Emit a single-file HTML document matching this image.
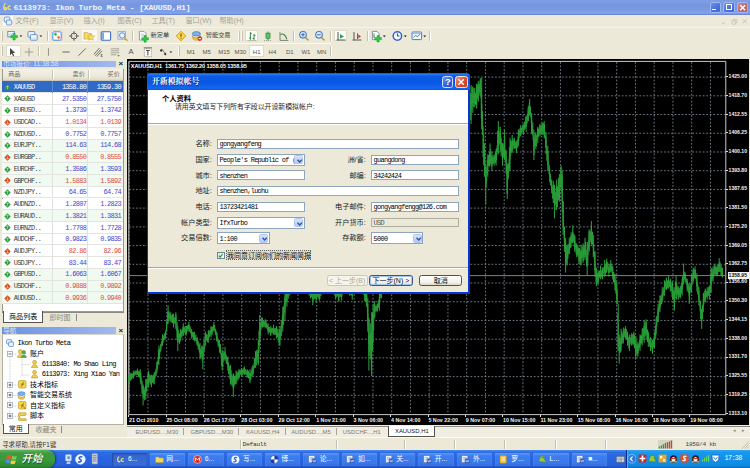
<!DOCTYPE html><html lang="zh"><head><meta charset="utf-8"><title>6113973: Ikon Turbo Meta - [XAUUSD,H1]</title><style>
*{box-sizing:border-box;margin:0;padding:0}
html,body{width:750px;height:468px;overflow:hidden;background:#ece9d8}
body{position:relative;font-family:"Liberation Mono","Noto Sans CJK SC",monospace;font-size:7px;color:#000;line-height:1}
.a{position:absolute}
.t{position:absolute;white-space:nowrap;line-height:1}
.m{font-family:"Liberation Mono","Noto Sans CJK SC",monospace;letter-spacing:-0.68px}
.s{font-family:"Liberation Sans","Noto Sans CJK SC",sans-serif}
#title{left:0;top:0;width:750px;height:14.6px;background:linear-gradient(#7e9fe6 0,#7695df 35%,#7a9be3 65%,#7fa5e8 88%,#6a7ad4 100%)}
#menubar{left:0;top:14.6px;width:750px;height:13px;background:#edeadb;border-bottom:1px solid #f6f5ec}
.mi{color:#a6a398;font-size:7.2px;top:17px}
.tb{background:#ece9d8}
.sep{position:absolute;width:1px;background:#c5c2b2;border-right:1px solid #fff;box-sizing:content-box}
.grip{position:absolute;width:2px;border-left:1px solid #faf9f4;border-right:1px solid #c4c1b2}
#mw{left:0;top:59px;width:124.5px;height:266px;background:#ece9d8}
.phead{position:absolute;height:7.6px;background:linear-gradient(90deg,#6c92e4,#86a5e8 50%,#a2baee);color:#dce6fa;font-size:6.6px}
.row{position:absolute;left:2.3px;width:121.2px;height:11.72px;border-bottom:1px solid #e4e4e0;font-size:6.9px}
.row .t{top:2.6px}
.up{color:#3a3ad0}.dn{color:#dc3a3a}
#dlg{left:146.6px;top:72.6px;width:323.8px;height:221.8px;background:#0a34d2;border-radius:4px 4px 0 0}
.fld{position:absolute;height:9.6px;background:#fff;border:1px solid #8fa4bd;font-size:6.9px}
.fld .t{left:2px;top:1.3px}
.lbl{position:absolute;font-size:7.2px;text-align:right;white-space:nowrap;line-height:1}
.cb{position:absolute;right:0.4px;top:0.4px;width:9px;height:9.2px;background:linear-gradient(#d8e4fd,#c2d3fb 60%,#b4c8f8);border-radius:1.5px;border:.5px solid #b0c4f0}
.btn{position:absolute;height:10.8px;border:1px solid #3a568e;border-radius:2.500px;background:linear-gradient(#fff,#f3f2ea 70%,#dcd8c8);font-size:7px;text-align:center;line-height:9.400px;white-space:nowrap}
#task{left:0;top:450.2px;width:750px;height:17.8px;background:linear-gradient(#4a8ef4 0,#2e6ce2 12%,#2963de 50%,#2760da 85%,#1f4cbc 100%)}
.tbtn{position:absolute;top:2.6px;height:13.4px;width:35.4px;border-radius:1.5px;background:linear-gradient(#5a95f4,#3c7df0 25%,#3a78ea 80%,#3068d8);box-shadow:inset 0 0 1px #8bb4ff;color:#fff;font-size:7px}
</style></head><body>
<div class="a" id="title"></div>
<svg class="a" style="left:2px;top:2px" width="10" height="10" viewBox="0 0 10 10"><path d="M3.5 1.2C1.5 3 1.2 6.2 2.6 7.6 3.4 8.3 4.6 7.6 4.4 6.3 4.2 5.2 2.8 5.4 2.9 6.5" fill="none" stroke="#f2e26a" stroke-width="1.3"/><path d="M8.6 4.2C7.2 3.6 5.8 4.6 5.9 6 6 7.4 7.8 7.8 8.8 6.9" fill="none" stroke="#f2e26a" stroke-width="1.3"/></svg>
<div class="t" style="left:13.4px;top:3.5px;font:bold 8.1px/1 'Liberation Mono',monospace;letter-spacing:-0.2px;color:#fff;opacity:.9">6113973: Ikon Turbo Meta - [XAUUSD,H1]</div>
<div class="a" style="left:709.6px;top:1.6px;width:11.4px;height:11.4px;border:1px solid #9fb6ee;border-radius:2px;background:linear-gradient(135deg,#6f94ea,#4a72d8 55%,#4168cc)"><div class="a" style="left:1.8px;top:6.2px;width:3.6px;height:1.6px;background:#fff"></div></div>
<div class="a" style="left:723.4px;top:1.6px;width:11.4px;height:11.4px;border:1px solid #9fb6ee;border-radius:2px;background:linear-gradient(135deg,#6f94ea,#4a72d8 55%,#4168cc)"><div class="a" style="left:1.8px;top:1.6px;width:5.8px;height:5.8px;border:1px solid #fff;border-top-width:1.8px"></div></div>
<div class="a" style="left:737px;top:1.6px;width:11.4px;height:11.4px;border:1px solid #9fb6ee;border-radius:2px;background:linear-gradient(135deg,#d08a90,#c2666e 55%,#b85a62)"><svg class="a" style="left:0;top:0" width="9.4" height="9.4" viewBox="0 0 9.4 9.4"><path d="M2.2 2.2L7.2 7.2M7.2 2.2L2.2 7.2" stroke="#fff" stroke-width="1.4"/></svg></div>
<div class="a" id="menubar"></div>
<svg class="a" style="left:2.6px;top:15.6px" width="10" height="10" viewBox="0 0 10 10"><rect x="0" y="0" width="10" height="10" fill="#fff" opacity=".7"/><rect x="1.2" y="1" width="5.6" height="5" rx="1" fill="#e8f0fb" stroke="#5f8fd0" stroke-width=".9"/><rect x="3.4" y="4" width="5.4" height="5" rx="1" fill="#e8f0fb" stroke="#5f8fd0" stroke-width=".9"/></svg>
<div class="t mi s" style="left:15.2px">文件(F)</div>
<div class="t mi s" style="left:49.4px">显示(V)</div>
<div class="t mi s" style="left:83.4px">插入(I)</div>
<div class="t mi s" style="left:117.4px">图表(C)</div>
<div class="t mi s" style="left:151.4px">工具(T)</div>
<div class="t mi s" style="left:185.4px">窗口(W)</div>
<div class="t mi s" style="left:219.4px">帮助(H)</div>
<svg class="a" style="left:719px;top:16.600px" width="30" height="9" viewBox="0 0 30 9"><path d="M3 6.200h2.400" stroke="#c6c3b4" stroke-width="1.100"/><path d="M13 3.800h3.400v3.400h-3.400zM14.400 3.800v-1.400h3.400v3.400h-1.400" stroke="#c6c3b4" stroke-width=".8" fill="none"/><path d="M23.800 2.400l3.800 3.800M27.600 2.400l-3.800 3.800" stroke="#c6c3b4" stroke-width="1"/></svg>
<div class="a tb" style="left:0;top:28px;width:750px;height:31px"></div>
<div class="a" style="left:0;top:42.6px;width:331px;height:1px;background:#dcd9ca"></div>
<div class="a" style="left:0;top:43.4px;width:331px;height:1px;background:#fbfaf6"></div>
<div class="grip" style="left:1.1px;top:30.6px;height:10px"></div>
<div class="grip" style="left:237.9px;top:30.6px;height:10px"></div>
<div class="grip" style="left:240.5px;top:30.6px;height:10px"></div>
<div class="grip" style="left:1.1px;top:46.4px;height:10px"></div>
<div class="grip" style="left:177.9px;top:46.4px;height:10px"></div>
<div class="sep" style="left:46.5px;top:30.6px;height:10px"></div>
<div class="sep" style="left:131.5px;top:30.6px;height:10px"></div>
<div class="sep" style="left:292.7px;top:30.6px;height:10px"></div>
<div class="sep" style="left:329.8px;top:30.6px;height:10px"></div>
<div class="sep" style="left:366.5px;top:30.6px;height:10px"></div>
<div class="sep" style="left:429px;top:30.6px;height:10px"></div>
<div class="sep" style="left:38.2px;top:46.4px;height:10px"></div>
<div class="sep" style="left:329.8px;top:46.4px;height:10px"></div>
<div class="a" style="left:50.8px;top:30px;width:11.8px;height:11.4px;background:#fcfcfa;border:1px solid #dedbcd;"></div>
<div class="a" style="left:81.8px;top:30px;width:14.8px;height:11.4px;background:#f9f8f4;"></div>
<div class="a" style="left:245px;top:30px;width:12.6px;height:11.4px;background:#fcfcfa;border:1px solid #dedbcd;"></div>
<div class="a" style="left:334px;top:30px;width:12.8px;height:11.4px;background:#fcfcfa;border:1px solid #dedbcd;"></div>
<div class="a" style="left:5.8px;top:45.4px;width:15px;height:11.4px;background:#fcfcfa;border:1px solid #dedbcd;"></div>
<div class="a" style="left:249.4px;top:45.4px;width:14.6px;height:11.4px;background:#fcfcfa;border:1px solid #dedbcd;"></div>
<svg class="a" style="left:6.8px;top:29.8px" width="17" height="12" viewBox="0 0 17 12"><rect x=".8" y="1.400" width="6.600" height="5.400" fill="#f4f8fd" stroke="#5b86c8" stroke-width=".9"/><path d="M2 5l1.400-1.400 1.200 1 1.600-1.600" stroke="#7a9ad0" stroke-width=".6" fill="none"/><path d="M3.8 5.6h2.2v-2.2h2.2v2.2h2.2v2.2h-2.2v2.2h-2.2v-2.2h-2.2z" fill="#2cc846" stroke="#1c9a30" stroke-width=".5"/><path d="M12.4 5.4l1.5 1.7 1.5-1.7z" fill="#222"/></svg>
<svg class="a" style="left:26.8px;top:29.8px" width="17" height="12" viewBox="0 0 17 12"><rect x="1" y="1.6" width="6.8" height="5.6" rx=".8" fill="#f4f8fd" stroke="#5b86c8" stroke-width=".9"/><rect x="3.4" y="4.600" width="6.8" height="5.600" rx=".8" fill="#f4f8fd" stroke="#5b86c8" stroke-width=".9"/><path d="M4.600 8.400h4.400" stroke="#9ab4dc" stroke-width=".6" stroke-dasharray=".8 .6"/><path d="M12.4 5.4l1.5 1.7 1.5-1.7z" fill="#222"/></svg>
<svg class="a" style="left:50.8px;top:29.8px" width="12" height="12" viewBox="0 0 12 12"><rect x="1.800" y="1.800" width="8.400" height="8.400" rx="1" fill="#fff" stroke="#4a86d8" stroke-width="1"/><path d="M4.400 4.400L7.800 7.800" stroke="#b0b8c0" stroke-width=".6"/><path d="M4.400 2.600l1.700 1.700-1.700 1.700-1.700-1.700z" fill="#2eb440"/><path d="M7.700 5.800l1.700 1.700-1.700 1.700-1.700-1.700z" fill="#e8783a"/></svg>
<svg class="a" style="left:67.7px;top:29.8px" width="12" height="12" viewBox="0 0 12 12"><circle cx="6" cy="6" r="3" fill="none" stroke="#666" stroke-width="1"/><path d="M6 1.200V4.400M6 7.600v3.200M1.200 6H4.400M7.600 6h3.200" stroke="#555" stroke-width="1"/></svg>
<svg class="a" style="left:83.4px;top:29.8px" width="12" height="12" viewBox="0 0 12 12"><path d="M1 2.600h3.600l.8 1H8v5.400H1z" fill="#f4dc6a" stroke="#c0a030" stroke-width=".6"/><path d="M8 3.600l1 2.300 2.500.2-1.900 1.600.6 2.500-2.200-1.400-2.200 1.400.6-2.500-1.900-1.600 2.500-.2z" fill="#fbe56a" stroke="#c8a020" stroke-width=".6"/></svg>
<svg class="a" style="left:100.2px;top:29.8px" width="12" height="12" viewBox="0 0 12 12"><rect x="1.200" y="1.800" width="9.400" height="8.400" rx="1" fill="#fff" stroke="#3f6fc0" stroke-width="1.100"/><rect x="1.800" y="2.400" width="2.200" height="7.200" fill="#7fa6e0"/></svg>
<svg class="a" style="left:117.4px;top:29.8px" width="12" height="12" viewBox="0 0 12 12"><rect x="1" y="1.600" width="7.400" height="7.600" fill="#dfe9f8" stroke="#8aa6d6" stroke-width=".8"/><circle cx="5.200" cy="5.400" r="2.700" fill="#eef4fc" stroke="#5a86c8" stroke-width=".9"/><path d="M7.400 7.800l3 3" stroke="#c8a030" stroke-width="1.500"/></svg>
<svg class="a" style="left:137.6px;top:29.8px" width="13" height="13" viewBox="0 0 13 13"><path d="M1.400 1.400h4.600l2 2v6.600h-6.600z" fill="#fff" stroke="#7a8aa0" stroke-width=".8"/><path d="M2.600 4.200h3.600M2.600 5.800h3.600" stroke="#9ab" stroke-width=".6"/><path d="M3.8 7.8h2.2v-2.2h2.2v2.2h2.2v2.2h-2.2v2.2h-2.2v-2.2h-2.2z" fill="#2cc846" stroke="#1c9a30" stroke-width=".5"/></svg>
<div class="t s" style="left:150.6px;top:32.4px;font-size:6.2px;color:#3a3a36">新定单</div>
<svg class="a" style="left:174.6px;top:29.8px" width="12" height="12" viewBox="0 0 12 12"><path d="M6 1.200l4.800 4.800-4.800 4.800-4.800-4.800z" fill="#fbd94a" stroke="#c89a10" stroke-width=".9"/><path d="M6 3.400v3.400M6 7.800v1" stroke="#6a4a00" stroke-width="1.100"/></svg>
<svg class="a" style="left:191px;top:29.8px" width="12" height="12" viewBox="0 0 12 12"><ellipse cx="5.400" cy="3.800" rx="4" ry="2.200" fill="#7ab2ea" stroke="#3a78c8" stroke-width=".7"/><path d="M1.400 5.600c0 3 8 3 8 0l-.6 3.400c-1 1.600-5.800 1.600-6.800 0z" fill="#f0c850" stroke="#b08a20" stroke-width=".6"/><circle cx="8.800" cy="8.600" r="2.300" fill="#e02818"/><rect x="7.700" y="8" width="2.200" height="1.200" fill="#fff"/></svg>
<div class="t s" style="left:205.8px;top:32.4px;font-size:6.2px;color:#3a3a36">智能交易</div>
<svg class="a" style="left:247px;top:29.8px" width="12" height="12" viewBox="0 0 12 12"><path d="M3.400 2.200v7.600M2 8h1.400M3.400 3.400h1.400M7 4v5.800M5.600 8.600h1.400M7 5.400h1.400" stroke="#2e8a3e" stroke-width="1"/><path d="M1.600 10.600h8" stroke="#777" stroke-width=".7" stroke-dasharray="1 1"/></svg>
<svg class="a" style="left:262px;top:29.8px" width="12" height="12" viewBox="0 0 12 12"><path d="M6 1.600v9" stroke="#2e8a3e" stroke-width="1"/><rect x="4" y="3.200" width="4" height="5" fill="#5ac86a" stroke="#2e8a3e" stroke-width=".8"/><path d="M2 10.600h8" stroke="#777" stroke-width=".7" stroke-dasharray="1 1"/></svg>
<svg class="a" style="left:278.4px;top:29.8px" width="12" height="12" viewBox="0 0 12 12"><path d="M2 2.200v8.200h8.400" stroke="#666" stroke-width=".8" fill="none"/><path d="M2.400 4.600c3-1.600 5 .4 6.400 4.600" stroke="#2e8a3e" stroke-width="1.100" fill="none"/></svg>
<svg class="a" style="left:297.8px;top:29.8px" width="12" height="12" viewBox="0 0 12 12"><circle cx="5" cy="4.800" r="3.300" fill="#e6f0fc" stroke="#3f78c8" stroke-width="1.100"/><path d="M7.600 7.600l2.800 2.800" stroke="#d0a030" stroke-width="1.700"/><path d="M3.200 4.800h3.600" stroke="#2a62b8" stroke-width="1"/><path d="M5 3v3.600" stroke="#2a62b8" stroke-width="1"/></svg>
<svg class="a" style="left:314.4px;top:29.8px" width="12" height="12" viewBox="0 0 12 12"><circle cx="5" cy="4.800" r="3.300" fill="#e6f0fc" stroke="#3f78c8" stroke-width="1.100"/><path d="M7.600 7.600l2.800 2.800" stroke="#d0a030" stroke-width="1.700"/><path d="M3.200 4.800h3.600" stroke="#2a62b8" stroke-width="1"/></svg>
<svg class="a" style="left:334.6px;top:29.8px" width="12" height="12" viewBox="0 0 12 12"><path d="M3 2v8.400M1.600 10h8.800" stroke="#555" stroke-width="1"/><path d="M5 4l4 2.400-4 2.400z" fill="#2fa84a"/></svg>
<svg class="a" style="left:351px;top:29.8px" width="12" height="12" viewBox="0 0 12 12"><path d="M3 2v8.400M1.600 10h8.800M6.600 3.400v5.600" stroke="#555" stroke-width="1"/><path d="M7.400 4.600l2.600 1.800-2.600 1.800z" fill="#c0392b"/></svg>
<svg class="a" style="left:371px;top:29.6px" width="16" height="13" viewBox="0 0 16 13"><path d="M1.400 1.400h4.600l2 2v6.200h-6.600z" fill="#fff" stroke="#6a7a90" stroke-width=".8"/><path d="M3 3.400v4.600" stroke="#2e8a3e" stroke-width="1"/><path d="M3.8 7.6h2.2v-2.2h2.2v2.2h2.2v2.2h-2.2v2.2h-2.2v-2.2h-2.2z" fill="#2cc846" stroke="#1c9a30" stroke-width=".5"/><path d="M11.8 5.6l1.5 1.7 1.5-1.7z" fill="#222"/></svg>
<svg class="a" style="left:391.6px;top:29.8px" width="16" height="12" viewBox="0 0 16 12"><circle cx="5.400" cy="6" r="4.200" fill="#f4f8ff" stroke="#2f68c8" stroke-width="1.500"/><path d="M5.400 3.400V6h2" stroke="#234" stroke-width=".9" fill="none"/><path d="M11.8 5.6l1.5 1.7 1.5-1.7z" fill="#222"/></svg>
<svg class="a" style="left:411.4px;top:29.8px" width="17" height="12" viewBox="0 0 17 12"><rect x="1" y="2" width="9.600" height="7.600" rx=".8" fill="#f2f6fc" stroke="#4a7ac8" stroke-width="1"/><path d="M2.400 7.400l2.200-2 1.800 1.200 2.600-2.400" stroke="#3a8a4a" stroke-width=".9" fill="none"/><path d="M1.600 3.600h8.400" stroke="#8ab0e8" stroke-width=".9"/><path d="M12.2 5.6l1.5 1.7 1.5-1.7z" fill="#222"/></svg>
<svg class="a" style="left:6.4px;top:45.8px" width="12" height="12" viewBox="0 0 12 12"><path d="M4 2v7.200l1.800-1.600 1.300 2.700 1.100-.5-1.300-2.700 2.300-.3z" fill="#484844"/></svg>
<svg class="a" style="left:23.2px;top:45.8px" width="12" height="12" viewBox="0 0 12 12"><path d="M6 1.800v8.400M1.800 6h8.400" stroke="#9a988c" stroke-width=".9"/></svg>
<svg class="a" style="left:46.2px;top:45.8px" width="5" height="12" viewBox="0 0 5 12"><path d="M2.500 2.200v7.600" stroke="#9a988c" stroke-width="1.100"/></svg>
<svg class="a" style="left:59.6px;top:45.8px" width="12" height="12" viewBox="0 0 12 12"><path d="M2.400 6h7.200" stroke="#77756c" stroke-width="1.100"/></svg>
<svg class="a" style="left:76px;top:45.8px" width="12" height="12" viewBox="0 0 12 12"><path d="M2.300 9.800L9.800 2.400" stroke="#6e6c64" stroke-width="1"/></svg>
<svg class="a" style="left:92.4px;top:45.8px" width="12" height="12" viewBox="0 0 12 12"><path d="M1.800 8.400L7.400 2M3.200 9.800L8.800 3.400M4.800 10.600L10 4.800" stroke="#66645c" stroke-width=".9"/><path d="M8.800 8.600h1.800M8.800 9.600h1.200M8.800 10.600h1.800" stroke="#333" stroke-width=".6"/></svg>
<svg class="a" style="left:109px;top:45.8px" width="12" height="12" viewBox="0 0 12 12"><path d="M1.800 2.800h8.400M1.800 4.800h8.400M1.800 6.800h8.400M1.800 8.800h5.600" stroke="#8c8a80" stroke-width=".7"/><path d="M8.400 9.200l1.200 1.400 1.200-1.400z" fill="#444"/></svg>
<div class="t s" style="left:128.4px;top:48.2px;font-size:7.6px;color:#55534c">A</div>
<svg class="a" style="left:141.6px;top:45.8px" width="12" height="12" viewBox="0 0 12 12"><rect x="2.400" y="2.600" width="7" height="8" fill="#fbfbf4" stroke="#8a887c" stroke-width=".7" stroke-dasharray="1 .6"/><path d="M4 4.400h3.800M5.900 4.400v5" stroke="#444" stroke-width="1"/><path d="M1.800 1.800h8.200" stroke="#6a6a60" stroke-width=".9"/></svg>
<svg class="a" style="left:158.4px;top:45.8px" width="16" height="12" viewBox="0 0 16 12"><path d="M1.800 4.400l1.400-1.600 1.400 1.600-1.400 1.600zM5.800 8l1.400-1.600L8.600 8 7.200 9.600z" fill="#333"/><path d="M4.400 3.200l2.200 3.800" stroke="#555" stroke-width=".7"/><path d="M11.4 5.4l1.5 1.7 1.5-1.7z" fill="#222"/></svg>
<div class="t s" style="left:186.8px;top:49px;font-size:6px;color:#55534c">M1</div>
<div class="t s" style="left:202.6px;top:49px;font-size:6px;color:#55534c">M5</div>
<div class="t s" style="left:218.2px;top:49px;font-size:6px;color:#55534c">M15</div>
<div class="t s" style="left:234.4px;top:49px;font-size:6px;color:#55534c">M30</div>
<div class="t s" style="left:252.8px;top:49px;font-size:6px;color:#55534c">H1</div>
<div class="t s" style="left:268.6px;top:49px;font-size:6px;color:#55534c">H4</div>
<div class="t s" style="left:286px;top:49px;font-size:6px;color:#55534c">D1</div>
<div class="t s" style="left:301.4px;top:49px;font-size:6px;color:#55534c">W1</div>
<div class="t s" style="left:317px;top:49px;font-size:6px;color:#55534c">MN</div>
<div class="phead" style="left:2.2px;top:60.6px;width:113.6px;height:6.8px"><div class="t s" style="left:1px;top:.2px;font-size:6.6px">市场报价: 11:38:58</div></div>
<div class="t s" style="left:118.4px;top:59.8px;font-size:8px;font-weight:bold;color:#222">×</div>
<div class="a" style="left:1.8px;top:68.6px;width:122.2px;height:243.4px;background:#fff;border:1px solid #9c9a8c"></div>
<div class="a" style="left:2.6px;top:69.4px;width:120.6px;height:11.2px;background:linear-gradient(#f3f1e8,#ece9d8 70%,#dedac8);border-bottom:1px solid #cbc7b8"></div>
<div class="a" style="left:2.6px;top:80.6px;width:120.6px;height:1.2px;background:#316ac5"></div>
<div class="t s" style="left:8.2px;top:71.4px;font-size:6.1px;color:#6a685e">商品</div>
<div class="t s" style="left:72.6px;top:71.4px;font-size:6.1px;color:#6a685e">卖价</div>
<div class="t s" style="left:107.6px;top:71.4px;font-size:6.1px;color:#6a685e">买价</div>
<div class="a" style="left:52.2px;top:70.4px;width:1px;height:9px;background:#c8c5b6;border-right:1px solid #fff;box-sizing:content-box"></div>
<div class="a" style="left:87.6px;top:70.4px;width:1px;height:9px;background:#c8c5b6;border-right:1px solid #fff;box-sizing:content-box"></div>
<div class="row" style="top:81.3px;background:#316ac5">
<svg class="a" style="left:2px;top:2.4px" width="7" height="7" viewBox="0 0 7 7"><path d="M3.5 .3L6.7 3.5 3.5 6.7.3 3.5z" fill="#2a9a3a"/><path d="M3.5 1.8v3.4M2.2 3.2l1.3-1.4 1.3 1.4" stroke="#fff" stroke-opacity=".55" stroke-width=".8" fill="none"/></svg>
<div class="t m" style="left:11.4px;color:#fff">XAUUSD</div>
<div class="t m" style="right:37.4px;color:#fff">1358.80</div>
<div class="t m" style="right:2.6px;color:#fff">1359.30</div>
<div class="a" style="left:49.8px;top:0;width:1px;height:11.72px;background:#5d8ad6"></div>
<div class="a" style="left:85.2px;top:0;width:1px;height:11.72px;background:#5d8ad6"></div>
</div>
<div class="row" style="top:93.02px;background:#fff">
<svg class="a" style="left:2px;top:2.4px" width="7" height="7" viewBox="0 0 7 7"><path d="M3.5 .3L6.7 3.5 3.5 6.7.3 3.5z" fill="#2a9a3a"/><path d="M3.5 1.8v3.4M2.2 3.2l1.3-1.4 1.3 1.4" stroke="#fff" stroke-opacity=".55" stroke-width=".8" fill="none"/></svg>
<div class="t m" style="left:11.4px;color:#3c3c38">XAGUSD</div>
<div class="t m" style="right:37.4px;color:#4545d2">27.5350</div>
<div class="t m" style="right:2.6px;color:#4545d2">27.5750</div>
<div class="a" style="left:49.8px;top:0;width:1px;height:11.72px;background:#e0e0dc"></div>
<div class="a" style="left:85.2px;top:0;width:1px;height:11.72px;background:#e0e0dc"></div>
</div>
<div class="row" style="top:104.74px;background:#fff">
<svg class="a" style="left:2px;top:2.4px" width="7" height="7" viewBox="0 0 7 7"><path d="M3.5 .3L6.7 3.5 3.5 6.7.3 3.5z" fill="#2a9a3a"/><path d="M3.5 1.8v3.4M2.2 3.2l1.3-1.4 1.3 1.4" stroke="#fff" stroke-opacity=".55" stroke-width=".8" fill="none"/></svg>
<div class="t m" style="left:11.4px;color:#3c3c38">EURUSD..</div>
<div class="t m" style="right:37.4px;color:#4545d2">1.3739</div>
<div class="t m" style="right:2.6px;color:#4545d2">1.3742</div>
<div class="a" style="left:49.8px;top:0;width:1px;height:11.72px;background:#e0e0dc"></div>
<div class="a" style="left:85.2px;top:0;width:1px;height:11.72px;background:#e0e0dc"></div>
</div>
<div class="row" style="top:116.46px;background:#fff">
<svg class="a" style="left:2px;top:2.4px" width="7" height="7" viewBox="0 0 7 7"><path d="M3.5 .3L6.7 3.5 3.5 6.7.3 3.5z" fill="#d8481c"/><path d="M3.5 1.8v3.4M2.2 3.8l1.3 1.4 1.3-1.4" stroke="#fff" stroke-opacity=".55" stroke-width=".8" fill="none"/></svg>
<div class="t m" style="left:11.4px;color:#3c3c38">USDCAD..</div>
<div class="t m" style="right:37.4px;color:#de4a44">1.0134</div>
<div class="t m" style="right:2.6px;color:#de4a44">1.0139</div>
<div class="a" style="left:49.8px;top:0;width:1px;height:11.72px;background:#e0e0dc"></div>
<div class="a" style="left:85.2px;top:0;width:1px;height:11.72px;background:#e0e0dc"></div>
</div>
<div class="row" style="top:128.18px;background:#fff">
<svg class="a" style="left:2px;top:2.4px" width="7" height="7" viewBox="0 0 7 7"><path d="M3.5 .3L6.7 3.5 3.5 6.7.3 3.5z" fill="#2a9a3a"/><path d="M3.5 1.8v3.4M2.2 3.2l1.3-1.4 1.3 1.4" stroke="#fff" stroke-opacity=".55" stroke-width=".8" fill="none"/></svg>
<div class="t m" style="left:11.4px;color:#3c3c38">NZDUSD..</div>
<div class="t m" style="right:37.4px;color:#4545d2">0.7752</div>
<div class="t m" style="right:2.6px;color:#4545d2">0.7757</div>
<div class="a" style="left:49.8px;top:0;width:1px;height:11.72px;background:#e0e0dc"></div>
<div class="a" style="left:85.2px;top:0;width:1px;height:11.72px;background:#e0e0dc"></div>
</div>
<div class="row" style="top:139.9px;background:#f1faf0">
<svg class="a" style="left:2px;top:2.4px" width="7" height="7" viewBox="0 0 7 7"><path d="M3.5 .3L6.7 3.5 3.5 6.7.3 3.5z" fill="#2a9a3a"/><path d="M3.5 1.8v3.4M2.2 3.2l1.3-1.4 1.3 1.4" stroke="#fff" stroke-opacity=".55" stroke-width=".8" fill="none"/></svg>
<div class="t m" style="left:11.4px;color:#3c3c38">EURJPY..</div>
<div class="t m" style="right:37.4px;color:#4545d2">114.63</div>
<div class="t m" style="right:2.6px;color:#4545d2">114.68</div>
<div class="a" style="left:49.8px;top:0;width:1px;height:11.72px;background:#e0e0dc"></div>
<div class="a" style="left:85.2px;top:0;width:1px;height:11.72px;background:#e0e0dc"></div>
</div>
<div class="row" style="top:151.62px;background:#f1faf0">
<svg class="a" style="left:2px;top:2.4px" width="7" height="7" viewBox="0 0 7 7"><path d="M3.5 .3L6.7 3.5 3.5 6.7.3 3.5z" fill="#d8481c"/><path d="M3.5 1.8v3.4M2.2 3.8l1.3 1.4 1.3-1.4" stroke="#fff" stroke-opacity=".55" stroke-width=".8" fill="none"/></svg>
<div class="t m" style="left:11.4px;color:#3c3c38">EURGBP..</div>
<div class="t m" style="right:37.4px;color:#de4a44">0.8550</div>
<div class="t m" style="right:2.6px;color:#de4a44">0.8555</div>
<div class="a" style="left:49.8px;top:0;width:1px;height:11.72px;background:#e0e0dc"></div>
<div class="a" style="left:85.2px;top:0;width:1px;height:11.72px;background:#e0e0dc"></div>
</div>
<div class="row" style="top:163.34px;background:#f1faf0">
<svg class="a" style="left:2px;top:2.4px" width="7" height="7" viewBox="0 0 7 7"><path d="M3.5 .3L6.7 3.5 3.5 6.7.3 3.5z" fill="#2a9a3a"/><path d="M3.5 1.8v3.4M2.2 3.2l1.3-1.4 1.3 1.4" stroke="#fff" stroke-opacity=".55" stroke-width=".8" fill="none"/></svg>
<div class="t m" style="left:11.4px;color:#3c3c38">EURCHF..</div>
<div class="t m" style="right:37.4px;color:#4545d2">1.3586</div>
<div class="t m" style="right:2.6px;color:#4545d2">1.3593</div>
<div class="a" style="left:49.8px;top:0;width:1px;height:11.72px;background:#e0e0dc"></div>
<div class="a" style="left:85.2px;top:0;width:1px;height:11.72px;background:#e0e0dc"></div>
</div>
<div class="row" style="top:175.06px;background:#f1faf0">
<svg class="a" style="left:2px;top:2.4px" width="7" height="7" viewBox="0 0 7 7"><path d="M3.5 .3L6.7 3.5 3.5 6.7.3 3.5z" fill="#d8481c"/><path d="M3.5 1.8v3.4M2.2 3.8l1.3 1.4 1.3-1.4" stroke="#fff" stroke-opacity=".55" stroke-width=".8" fill="none"/></svg>
<div class="t m" style="left:11.4px;color:#3c3c38">GBPCHF..</div>
<div class="t m" style="right:37.4px;color:#de4a44">1.5883</div>
<div class="t m" style="right:2.6px;color:#de4a44">1.5892</div>
<div class="a" style="left:49.8px;top:0;width:1px;height:11.72px;background:#e0e0dc"></div>
<div class="a" style="left:85.2px;top:0;width:1px;height:11.72px;background:#e0e0dc"></div>
</div>
<div class="row" style="top:186.78px;background:#fff">
<svg class="a" style="left:2px;top:2.4px" width="7" height="7" viewBox="0 0 7 7"><path d="M3.5 .3L6.7 3.5 3.5 6.7.3 3.5z" fill="#2a9a3a"/><path d="M3.5 1.8v3.4M2.2 3.2l1.3-1.4 1.3 1.4" stroke="#fff" stroke-opacity=".55" stroke-width=".8" fill="none"/></svg>
<div class="t m" style="left:11.4px;color:#3c3c38">NZDJPY..</div>
<div class="t m" style="right:37.4px;color:#4545d2">64.65</div>
<div class="t m" style="right:2.6px;color:#4545d2">64.74</div>
<div class="a" style="left:49.8px;top:0;width:1px;height:11.72px;background:#e0e0dc"></div>
<div class="a" style="left:85.2px;top:0;width:1px;height:11.72px;background:#e0e0dc"></div>
</div>
<div class="row" style="top:198.5px;background:#fff">
<svg class="a" style="left:2px;top:2.4px" width="7" height="7" viewBox="0 0 7 7"><path d="M3.5 .3L6.7 3.5 3.5 6.7.3 3.5z" fill="#2a9a3a"/><path d="M3.5 1.8v3.4M2.2 3.2l1.3-1.4 1.3 1.4" stroke="#fff" stroke-opacity=".55" stroke-width=".8" fill="none"/></svg>
<div class="t m" style="left:11.4px;color:#3c3c38">AUDNZD..</div>
<div class="t m" style="right:37.4px;color:#4545d2">1.2807</div>
<div class="t m" style="right:2.6px;color:#4545d2">1.2823</div>
<div class="a" style="left:49.8px;top:0;width:1px;height:11.72px;background:#e0e0dc"></div>
<div class="a" style="left:85.2px;top:0;width:1px;height:11.72px;background:#e0e0dc"></div>
</div>
<div class="row" style="top:210.22px;background:#f1faf0">
<svg class="a" style="left:2px;top:2.4px" width="7" height="7" viewBox="0 0 7 7"><path d="M3.5 .3L6.7 3.5 3.5 6.7.3 3.5z" fill="#2a9a3a"/><path d="M3.5 1.8v3.4M2.2 3.2l1.3-1.4 1.3 1.4" stroke="#fff" stroke-opacity=".55" stroke-width=".8" fill="none"/></svg>
<div class="t m" style="left:11.4px;color:#3c3c38">EURAUD..</div>
<div class="t m" style="right:37.4px;color:#4545d2">1.3821</div>
<div class="t m" style="right:2.6px;color:#4545d2">1.3831</div>
<div class="a" style="left:49.8px;top:0;width:1px;height:11.72px;background:#e0e0dc"></div>
<div class="a" style="left:85.2px;top:0;width:1px;height:11.72px;background:#e0e0dc"></div>
</div>
<div class="row" style="top:221.94px;background:#fff">
<svg class="a" style="left:2px;top:2.4px" width="7" height="7" viewBox="0 0 7 7"><path d="M3.5 .3L6.7 3.5 3.5 6.7.3 3.5z" fill="#2a9a3a"/><path d="M3.5 1.8v3.4M2.2 3.2l1.3-1.4 1.3 1.4" stroke="#fff" stroke-opacity=".55" stroke-width=".8" fill="none"/></svg>
<div class="t m" style="left:11.4px;color:#3c3c38">EURNZD..</div>
<div class="t m" style="right:37.4px;color:#4545d2">1.7708</div>
<div class="t m" style="right:2.6px;color:#4545d2">1.7728</div>
<div class="a" style="left:49.8px;top:0;width:1px;height:11.72px;background:#e0e0dc"></div>
<div class="a" style="left:85.2px;top:0;width:1px;height:11.72px;background:#e0e0dc"></div>
</div>
<div class="row" style="top:233.66px;background:#fff">
<svg class="a" style="left:2px;top:2.4px" width="7" height="7" viewBox="0 0 7 7"><path d="M3.5 .3L6.7 3.5 3.5 6.7.3 3.5z" fill="#2a9a3a"/><path d="M3.5 1.8v3.4M2.2 3.2l1.3-1.4 1.3 1.4" stroke="#fff" stroke-opacity=".55" stroke-width=".8" fill="none"/></svg>
<div class="t m" style="left:11.4px;color:#3c3c38">AUDCHF..</div>
<div class="t m" style="right:37.4px;color:#4545d2">0.9823</div>
<div class="t m" style="right:2.6px;color:#4545d2">0.9835</div>
<div class="a" style="left:49.8px;top:0;width:1px;height:11.72px;background:#e0e0dc"></div>
<div class="a" style="left:85.2px;top:0;width:1px;height:11.72px;background:#e0e0dc"></div>
</div>
<div class="row" style="top:245.38px;background:#fff">
<svg class="a" style="left:2px;top:2.4px" width="7" height="7" viewBox="0 0 7 7"><path d="M3.5 .3L6.7 3.5 3.5 6.7.3 3.5z" fill="#d8481c"/><path d="M3.5 1.8v3.4M2.2 3.8l1.3 1.4 1.3-1.4" stroke="#fff" stroke-opacity=".55" stroke-width=".8" fill="none"/></svg>
<div class="t m" style="left:11.4px;color:#3c3c38">AUDJPY..</div>
<div class="t m" style="right:37.4px;color:#de4a44">82.86</div>
<div class="t m" style="right:2.6px;color:#de4a44">82.96</div>
<div class="a" style="left:49.8px;top:0;width:1px;height:11.72px;background:#e0e0dc"></div>
<div class="a" style="left:85.2px;top:0;width:1px;height:11.72px;background:#e0e0dc"></div>
</div>
<div class="row" style="top:257.1px;background:#fff">
<svg class="a" style="left:2px;top:2.4px" width="7" height="7" viewBox="0 0 7 7"><path d="M3.5 .3L6.7 3.5 3.5 6.7.3 3.5z" fill="#2a9a3a"/><path d="M3.5 1.8v3.4M2.2 3.2l1.3-1.4 1.3 1.4" stroke="#fff" stroke-opacity=".55" stroke-width=".8" fill="none"/></svg>
<div class="t m" style="left:11.4px;color:#3c3c38">USDJPY..</div>
<div class="t m" style="right:37.4px;color:#4545d2">83.44</div>
<div class="t m" style="right:2.6px;color:#4545d2">83.47</div>
<div class="a" style="left:49.8px;top:0;width:1px;height:11.72px;background:#e0e0dc"></div>
<div class="a" style="left:85.2px;top:0;width:1px;height:11.72px;background:#e0e0dc"></div>
</div>
<div class="row" style="top:268.82px;background:#f1faf0">
<svg class="a" style="left:2px;top:2.4px" width="7" height="7" viewBox="0 0 7 7"><path d="M3.5 .3L6.7 3.5 3.5 6.7.3 3.5z" fill="#2a9a3a"/><path d="M3.5 1.8v3.4M2.2 3.2l1.3-1.4 1.3 1.4" stroke="#fff" stroke-opacity=".55" stroke-width=".8" fill="none"/></svg>
<div class="t m" style="left:11.4px;color:#3c3c38">GBPUSD..</div>
<div class="t m" style="right:37.4px;color:#4545d2">1.6063</div>
<div class="t m" style="right:2.6px;color:#4545d2">1.6067</div>
<div class="a" style="left:49.8px;top:0;width:1px;height:11.72px;background:#e0e0dc"></div>
<div class="a" style="left:85.2px;top:0;width:1px;height:11.72px;background:#e0e0dc"></div>
</div>
<div class="row" style="top:280.54px;background:#f1faf0">
<svg class="a" style="left:2px;top:2.4px" width="7" height="7" viewBox="0 0 7 7"><path d="M3.5 .3L6.7 3.5 3.5 6.7.3 3.5z" fill="#d8481c"/><path d="M3.5 1.8v3.4M2.2 3.8l1.3 1.4 1.3-1.4" stroke="#fff" stroke-opacity=".55" stroke-width=".8" fill="none"/></svg>
<div class="t m" style="left:11.4px;color:#3c3c38">USDCHF..</div>
<div class="t m" style="right:37.4px;color:#de4a44">0.9888</div>
<div class="t m" style="right:2.6px;color:#de4a44">0.9892</div>
<div class="a" style="left:49.8px;top:0;width:1px;height:11.72px;background:#e0e0dc"></div>
<div class="a" style="left:85.2px;top:0;width:1px;height:11.72px;background:#e0e0dc"></div>
</div>
<div class="row" style="top:292.26px;background:#f1faf0">
<svg class="a" style="left:2px;top:2.4px" width="7" height="7" viewBox="0 0 7 7"><path d="M3.5 .3L6.7 3.5 3.5 6.7.3 3.5z" fill="#d8481c"/><path d="M3.5 1.8v3.4M2.2 3.8l1.3 1.4 1.3-1.4" stroke="#fff" stroke-opacity=".55" stroke-width=".8" fill="none"/></svg>
<div class="t m" style="left:11.4px;color:#3c3c38">AUDUSD..</div>
<div class="t m" style="right:37.4px;color:#de4a44">0.9936</div>
<div class="t m" style="right:2.6px;color:#de4a44">0.9940</div>
<div class="a" style="left:49.8px;top:0;width:1px;height:11.72px;background:#e0e0dc"></div>
<div class="a" style="left:85.2px;top:0;width:1px;height:11.72px;background:#e0e0dc"></div>
</div>
<div class="a" style="left:1.8px;top:311.6px;width:122.4px;height:1px;background:#8a887c"></div>
<div class="a" style="left:3.2px;top:311px;width:39.4px;height:11.8px;background:#fff;border:1px solid #55534c;border-top:none"></div>
<div class="t s" style="left:9px;top:313.6px;font-size:7.1px;color:#000">商品列表</div>
<div class="t s" style="left:49.4px;top:313.8px;font-size:7px;color:#8a887c">即时图</div>
<div class="a" style="left:75.6px;top:314px;width:1px;height:7px;background:#8a887c"></div>
<div class="phead" style="left:2.2px;top:327.4px;width:113.6px;height:6.9px"><div class="t s" style="left:1px;top:.2px;font-size:6.6px">导航</div></div>
<div class="t s" style="left:118.4px;top:326.8px;font-size:8px;font-weight:bold;color:#222">×</div>
<div class="a" style="left:1.8px;top:334.4px;width:122.4px;height:90.4px;background:#fff;border:1px solid #b4b1a2;border-top-color:#dcdacd"></div>
<div class="a" style="left:0;top:.7px;width:125px;height:0">
<svg class="a" style="left:0;top:336px" width="60" height="88" viewBox="0 0 60 88"><path d="M10 20v60M22 22v17M22 27.6h8M22 38h8M12 48h6M12 58.4h6M12 69h6M12 79.4h6M12 17h5" stroke="#b0aea4" stroke-width=".7" stroke-dasharray=".8 .8" fill="none"/></svg>
<svg class="a" style="left:6.4px;top:338.6px" width="8" height="8" viewBox="0 0 8 8"><rect x=".6" y=".6" width="5" height="4.4" rx=".8" fill="#eef4fc" stroke="#4a86d8" stroke-width=".8"/><rect x="2.6" y="3" width="5" height="4.4" rx=".8" fill="#eef4fc" stroke="#4a86d8" stroke-width=".8"/></svg>
<div class="t m" style="left:17.4px;top:339px;font-size:7px;color:#000">Ikon Turbo Meta</div>
<svg class="a" style="left:7.2px;top:350.2px" width="6" height="6" viewBox="0 0 6 6"><rect x=".5" y=".5" width="5" height="5" fill="#fff" stroke="#8a9ab0" stroke-width=".7"/><path d="M1.6 3h2.8" stroke="#222" stroke-width=".7"/></svg>
<svg class="a" style="left:17px;top:348.4px" width="10" height="9" viewBox="0 0 10 9"><circle cx="3.4" cy="2.6" r="2" fill="#f2cc3a" stroke="#a8861a" stroke-width=".5"/><path d="M.6 8.4c0-4 5.6-4 5.6 0z" fill="#f2cc3a" stroke="#a8861a" stroke-width=".5"/><circle cx="6.8" cy="3.4" r="1.8" fill="#5ab04a" stroke="#2e7a2a" stroke-width=".5"/><path d="M4.4 8.6c0-3.4 5-3.4 5 0z" fill="#5ab04a" stroke="#2e7a2a" stroke-width=".5"/></svg>
<div class="t s" style="left:30px;top:349.4px;font-size:7px;color:#000">账户</div>
<svg class="a" style="left:30.6px;top:359.2px" width="8" height="8.4" viewBox="0 0 8 8.4"><circle cx="3.6" cy="2.2" r="1.9" fill="#f4cf40" stroke="#a8861a" stroke-width=".5"/><path d="M.6 8c0-4.4 6-4.4 6 0z" fill="#f4cf40" stroke="#a8861a" stroke-width=".5"/></svg>
<div class="t m" style="left:41.8px;top:360px;font-size:7px;color:#000">6113840: Mo Shao Ling</div>
<svg class="a" style="left:30.6px;top:369.6px" width="8" height="8.4" viewBox="0 0 8 8.4"><circle cx="3.6" cy="2.2" r="1.9" fill="#f4cf40" stroke="#a8861a" stroke-width=".5"/><path d="M.6 8c0-4.4 6-4.4 6 0z" fill="#f4cf40" stroke="#a8861a" stroke-width=".5"/></svg>
<div class="t m" style="left:41.8px;top:370.4px;font-size:7px;color:#000">6113973: Xing Xiao Yan</div>
<svg class="a" style="left:7.2px;top:381px" width="6" height="6" viewBox="0 0 6 6"><rect x=".5" y=".5" width="5" height="5" fill="#fff" stroke="#8a9ab0" stroke-width=".7"/><path d="M1.6 3h2.8M3 1.6v2.8" stroke="#222" stroke-width=".7"/></svg>
<svg class="a" style="left:18px;top:379.6px" width="9" height="9" viewBox="0 0 9 9"><rect x=".6" y=".6" width="7.4" height="7.4" rx="1" fill="#f6d84a" stroke="#b0901c" stroke-width=".6"/><path d="M3.2 6.6c1.4 0 1.2-4.6 2.6-4.6M2.8 4.2h3" stroke="#6a5408" stroke-width=".7" fill="none"/></svg>
<div class="t s" style="left:30px;top:380.4px;font-size:7px;color:#000">技术指标</div>
<svg class="a" style="left:7.2px;top:391.4px" width="6" height="6" viewBox="0 0 6 6"><rect x=".5" y=".5" width="5" height="5" fill="#fff" stroke="#8a9ab0" stroke-width=".7"/><path d="M1.6 3h2.8M3 1.6v2.8" stroke="#222" stroke-width=".7"/></svg>
<svg class="a" style="left:17.4px;top:390px" width="10" height="9" viewBox="0 0 10 9"><ellipse cx="4.4" cy="2.6" rx="3.6" ry="1.9" fill="#7ab2ea" stroke="#3a78c8" stroke-width=".6"/><path d="M1 4.2c0 2.4 7 2.4 7 0l-.6 3c-1 1.4-4.8 1.4-5.8 0z" fill="#f0c850" stroke="#b08a20" stroke-width=".5"/></svg>
<div class="t s" style="left:30px;top:390.8px;font-size:7px;color:#000">智能交易系统</div>
<svg class="a" style="left:7.2px;top:401.8px" width="6" height="6" viewBox="0 0 6 6"><rect x=".5" y=".5" width="5" height="5" fill="#fff" stroke="#8a9ab0" stroke-width=".7"/><path d="M1.6 3h2.8M3 1.6v2.8" stroke="#222" stroke-width=".7"/></svg>
<svg class="a" style="left:18px;top:400.4px" width="9" height="9" viewBox="0 0 9 9"><rect x=".6" y=".6" width="7.4" height="7.4" rx="1" fill="#f6d84a" stroke="#b0901c" stroke-width=".6"/><path d="M3.2 6.6c1.4 0 1.2-4.6 2.6-4.6M2.8 4.2h3" stroke="#6a5408" stroke-width=".7" fill="none"/><path d="M5 5.4l2.6 2.6" stroke="#c03a2a" stroke-width=".9"/></svg>
<div class="t s" style="left:30px;top:401.4px;font-size:7px;color:#000">自定义指标</div>
<svg class="a" style="left:7.2px;top:412.4px" width="6" height="6" viewBox="0 0 6 6"><rect x=".5" y=".5" width="5" height="5" fill="#fff" stroke="#8a9ab0" stroke-width=".7"/><path d="M1.6 3h2.8M3 1.6v2.8" stroke="#222" stroke-width=".7"/></svg>
<svg class="a" style="left:18px;top:411px" width="9" height="9.4" viewBox="0 0 9 9.4"><path d="M1 .8h6.6c.8 1 .8 2-.2 2.800h-5c-1 1-1 2.200 0 3.200h5.600c.8.600.8 1.400 0 2h-6.800c-1-1-1-2.600 0-3.600-1-1.200-1-3.200-.2-4.400z" fill="#f4d44a" stroke="#a8861a" stroke-width=".6"/></svg>
<div class="t s" style="left:30px;top:411.8px;font-size:7px;color:#000">脚本</div>
</div>
<div class="a" style="left:3.2px;top:424.2px;width:25.4px;height:9.6px;background:#fff;border:1px solid #55534c;border-top:none"></div>
<div class="t s" style="left:8.8px;top:425.4px;font-size:7px;color:#111">常用</div>
<div class="t s" style="left:35.4px;top:425.6px;font-size:7px;color:#8a887c">收藏夹</div>
<div class="a" style="left:61.4px;top:425.8px;width:1px;height:7px;background:#8a887c"></div>
<div class="a" style="left:126.8px;top:59.2px;width:622px;height:366.2px;background:#000"></div>
<svg class="a" style="left:0;top:0" width="750" height="468" viewBox="0 0 750 468"><path d="M129.20 62V414.4M147.95 62V414.4M166.70 62V414.4M185.45 62V414.4M204.20 62V414.4M222.95 62V414.4M241.70 62V414.4M260.45 62V414.4M279.20 62V414.4M297.95 62V414.4M316.70 62V414.4M335.45 62V414.4M354.20 62V414.4M372.95 62V414.4M391.70 62V414.4M410.45 62V414.4M429.20 62V414.4M447.95 62V414.4M466.70 62V414.4M485.45 62V414.4M504.20 62V414.4M522.95 62V414.4M541.70 62V414.4M560.45 62V414.4M579.20 62V414.4M597.95 62V414.4M616.70 62V414.4M635.45 62V414.4M654.20 62V414.4M672.95 62V414.4M691.70 62V414.4M710.45 62V414.4" stroke="#8792a0" stroke-width="1" stroke-dasharray="1.76 1.76" fill="none" opacity=".8"/><path d="M129 77.10H726M129 95.82H726M129 114.54H726M129 133.26H726M129 151.98H726M129 170.70H726M129 189.42H726M129 208.14H726M129 226.86H726M129 245.58H726M129 264.30H726M129 283.02H726M129 301.74H726M129 320.46H726M129 339.18H726M129 357.90H726M129 376.62H726M129 395.34H726" stroke="#8792a0" stroke-width="1" stroke-dasharray="1.76 1.76" fill="none" opacity=".8"/><path d="M128.8 61.4H725.8V414.6H128.8z" stroke="#c8c8c8" stroke-width="1" fill="none"/><path d="M129.2 374.5V380.9M130.3 373.1V380.5M131.5 373.3V379.5M132.7 373.7V377.3M133.8 372.5V375.6M135.0 370.3V373.4M136.2 371.6V375.4M137.4 369.5V372.2M138.5 371.5V376.9M139.7 370.8V377.8M140.9 372.9V384.2M142.0 380.3V393.6M143.2 385.9V395.1M144.4 389.8V400.4M145.5 386.0V395.5M146.7 378.9V391.6M147.9 373.5V384.5M149.1 373.4V379.9M150.2 375.0V384.6M151.4 378.2V384.6M152.6 375.3V382.4M153.7 374.7V383.7M154.9 372.9V378.8M156.1 369.0V376.0M157.2 360.9V369.4M158.4 350.3V364.3M159.6 349.1V359.1M160.8 343.9V350.7M161.9 341.1V346.0M163.1 335.5V342.7M164.3 333.4V339.8M165.4 331.6V336.7M166.6 321.2V332.0M167.8 311.7V324.2M168.9 311.6V320.6M170.1 315.3V320.1M171.3 315.7V322.6M172.5 314.1V323.0M173.6 317.7V325.3M174.8 317.2V323.2M176.0 314.6V322.4M177.1 322.0V340.4M178.3 330.1V339.9M179.5 334.3V343.8M180.6 332.0V337.2M181.8 330.4V338.1M183.0 326.7V335.8M184.2 326.6V332.5M185.3 329.5V335.1M186.5 326.0V333.7M187.7 325.1V329.6M188.8 324.5V329.1M190.0 325.8V331.9M191.2 330.2V333.9M192.3 332.1V337.3M193.5 332.1V339.7M194.7 334.5V340.2M195.9 334.9V340.9M197.0 338.3V344.7M198.2 341.2V349.7M199.4 344.3V352.3M200.5 349.8V357.4M201.7 345.8V354.3M202.9 347.5V358.4M204.0 340.1V350.2M205.2 335.0V340.8M206.4 334.2V339.9M207.6 337.3V342.3M208.7 330.6V338.5M209.9 330.1V335.8M211.1 327.0V333.0M212.2 326.9V334.7M213.4 324.7V330.5M214.6 325.1V329.2M215.7 328.8V334.9M216.9 333.0V340.3M218.1 339.9V346.5M219.3 340.4V347.8M220.4 344.0V353.4M221.6 353.0V365.9M222.8 352.4V367.0M223.9 351.2V359.3M225.1 353.0V359.3M226.3 355.5V363.9M227.4 357.2V364.4M228.6 363.0V374.3M229.8 366.1V379.4M231.0 370.0V384.6M232.1 375.6V386.0M233.3 374.1V386.6M234.5 375.8V383.5M235.6 376.4V384.0M236.8 371.5V381.6M238.0 371.8V380.4M239.1 369.8V377.4M240.3 369.7V373.9M241.5 368.9V372.8M242.7 369.8V375.2M243.8 367.7V373.9M245.0 369.1V374.6M246.2 371.3V374.7M247.3 370.6V377.2M248.5 370.7V378.4M249.7 374.7V380.7M250.8 372.7V379.5M252.0 367.2V376.6M253.2 367.8V374.3M254.4 358.1V368.2M255.5 353.0V360.2M256.7 350.0V365.4M257.9 352.4V362.8M259.0 330.8V353.0M260.2 322.4V336.6M261.4 317.2V325.2M262.5 319.0V326.7M263.7 321.5V327.1M264.9 322.0V326.9M266.1 321.0V327.7M267.2 323.7V328.8M268.4 326.9V332.2M269.6 327.1V332.2M270.7 330.8V335.1M271.9 327.7V332.8M273.1 328.1V334.2M274.2 329.0V334.8M275.4 328.1V334.9M276.6 326.7V334.4M277.8 328.9V337.1M278.9 336.5V342.7M280.1 330.5V339.4M281.3 321.0V336.1M282.4 315.1V327.7M283.6 306.7V324.7M284.8 297.8V312.7M285.9 286.7V302.2M287.1 282.6V302.1M288.3 283.1V298.7M289.5 276.2V293.8M290.6 275.9V289.4M291.8 275.8V287.4M293.0 273.0V283.3M294.1 274.2V283.9M295.3 273.6V284.9M296.5 271.5V284.6M297.6 277.2V287.5M298.8 273.6V285.9M300.0 277.8V284.9M301.2 276.6V283.1M302.3 280.6V286.9M303.5 278.8V289.3M304.7 281.4V287.6M305.8 278.1V287.3M307.0 281.7V292.2M308.2 287.0V293.6M309.3 285.0V292.8M310.5 286.0V298.4M311.7 289.6V297.1M312.9 289.8V300.6M314.0 290.3V298.2M315.2 287.7V298.8M316.4 289.8V299.2M317.5 290.3V295.9M318.7 289.7V298.6M319.9 293.6V299.0M321.0 286.8V296.1M322.2 282.9V288.3M323.4 284.5V289.5M324.6 279.4V285.7M325.7 282.8V290.1M326.9 278.4V288.1M328.1 283.5V289.5M329.2 279.9V288.5M330.4 277.5V283.3M331.6 280.5V289.8M332.7 287.6V293.3M333.9 285.7V294.7M335.1 290.4V296.2M336.3 291.9V297.6M337.4 288.2V296.3M338.6 291.8V300.7M339.8 288.4V295.4M340.9 288.7V296.9M342.1 287.7V293.3M343.3 285.3V290.5M344.4 282.8V289.3M345.6 280.5V289.3M346.8 282.0V289.1M348.0 282.8V289.0M349.1 284.4V289.8M350.3 287.2V295.3M351.5 289.6V295.3M352.6 286.5V296.5M353.8 284.0V293.2M355.0 283.0V290.4M356.1 281.2V288.2M357.3 281.6V290.4M358.5 282.2V289.2M359.7 279.2V288.6M360.8 279.1V286.8M362.0 281.3V286.9M363.2 286.5V294.7M364.3 287.6V294.4M365.5 294.0V301.7M366.7 292.7V305.4M367.8 304.2V321.5M369.0 321.1V355.9M370.2 332.2V348.9M371.4 341.5V369.9M372.5 312.4V350.9M373.7 316.2V330.1M374.9 304.3V316.6M376.0 305.6V310.1M377.2 305.6V310.5M378.4 300.7V307.6M379.5 293.2V301.1M380.7 288.8V296.4M381.9 280.6V289.2M383.1 278.2V286.7M384.2 275.4V285.9M385.4 271.5V283.1M386.6 270.0V281.6M387.7 265.8V275.2M388.9 261.4V275.5M390.1 261.6V273.9M391.2 264.4V271.7M392.4 255.8V269.8M393.6 255.0V268.0M394.8 253.7V262.1M395.9 251.8V263.4M397.1 247.3V261.5M398.3 246.8V259.4M399.4 242.5V256.2M400.6 236.4V246.3M401.8 237.5V246.6M402.9 240.5V249.5M404.1 233.1V246.4M405.3 230.7V244.8M406.5 223.7V236.7M407.6 225.0V241.2M408.8 223.0V236.5M410.0 216.6V231.9M411.1 215.2V231.4M412.3 214.6V224.3M413.5 210.0V226.5M414.6 212.2V229.1M415.8 207.1V221.6M417.0 207.5V222.0M418.2 202.5V220.3M419.3 196.8V213.5M420.5 197.1V208.5M421.7 193.3V211.5M422.8 188.9V205.3M424.0 190.2V201.0M425.2 189.1V207.1M426.3 183.5V201.8M427.5 183.3V199.9M428.7 177.6V193.7M429.9 174.9V196.4M431.0 175.4V198.1M432.2 176.3V187.4M433.4 172.5V193.8M434.5 166.9V183.7M435.7 174.9V188.8M436.9 167.3V181.4M438.0 164.5V177.8M439.2 154.6V178.7M440.4 154.9V177.4M441.6 153.1V176.8M442.7 159.8V174.8M443.9 144.2V162.9M445.1 150.4V162.7M446.2 142.6V161.2M447.4 142.2V156.6M448.6 146.0V163.1M449.7 145.7V158.4M450.9 129.8V154.7M452.1 130.7V157.0M453.3 125.8V152.0M454.4 127.1V145.7M455.6 122.0V150.1M456.8 122.8V141.6M457.9 114.8V132.5M459.1 127.3V142.4M460.3 124.2V142.3M461.4 111.0V128.7M462.6 106.5V128.5M463.8 116.1V136.0M465.0 104.9V133.2M466.1 106.9V131.3M467.3 97.6V127.2M468.5 92.1V118.4M469.6 93.6V120.3M470.8 92.8V120.1M472.0 87.2V103.5M473.1 87.8V107.3M474.3 90.7V102.8M475.5 93.8V104.7M476.7 85.2V105.2M477.8 84.2V98.8M479.0 83.0V95.3M480.2 80.1V88.4M481.3 88.0V118.5M482.5 111.5V134.5M483.7 134.1V165.1M484.8 152.5V172.5M486.0 167.1V184.3M487.2 159.6V173.9M488.4 154.8V165.5M489.5 152.7V166.5M490.7 149.0V163.9M491.9 155.9V166.7M493.0 155.5V163.8M494.2 156.3V160.9M495.4 151.6V163.2M496.5 148.4V160.3M497.7 130.8V152.3M498.9 127.0V142.3M500.1 131.3V145.6M501.2 137.7V156.4M502.4 143.2V160.0M503.6 147.0V157.5M504.7 136.6V158.8M505.9 149.5V164.2M507.1 163.8V193.9M508.2 164.2V177.6M509.4 147.1V169.6M510.6 140.1V152.4M511.8 140.9V153.0M512.9 138.1V149.7M514.1 140.3V148.2M515.3 141.7V148.4M516.4 146.1V151.1M517.6 140.5V147.8M518.8 130.4V140.9M519.9 128.4V133.9M521.1 127.6V134.8M522.3 125.1V129.9M523.5 126.1V133.0M524.6 121.6V129.1M525.8 117.0V127.2M527.0 115.5V123.7M528.1 108.7V120.8M529.3 102.9V115.2M530.5 106.9V115.6M531.6 115.2V131.9M532.8 122.3V135.5M534.0 135.1V155.2M535.2 134.0V146.0M536.3 135.6V146.7M537.5 128.2V136.1M538.7 128.6V136.5M539.8 125.1V133.7M541.0 125.7V134.7M542.2 123.7V131.2M543.3 122.8V134.6M544.5 124.4V137.4M545.7 137.0V147.9M546.9 147.5V160.8M548.0 151.1V165.1M549.2 164.7V174.1M550.4 173.7V185.4M551.5 181.8V188.0M552.7 187.6V198.7M553.9 184.3V196.5M555.0 191.3V204.5M556.2 186.5V210.2M557.4 186.4V207.1M558.6 178.0V200.3M559.7 185.7V198.2M560.9 167.5V186.1M562.1 175.6V201.7M563.2 201.3V227.5M564.4 226.7V238.1M565.6 237.7V262.3M566.7 245.6V263.7M567.9 244.2V258.8M569.1 244.3V253.2M570.3 236.6V248.2M571.4 235.4V241.7M572.6 233.2V242.8M573.8 233.7V241.8M574.9 236.4V248.9M576.1 246.0V254.2M577.3 245.0V255.4M578.4 247.6V254.0M579.6 247.9V261.8M580.8 250.2V264.3M582.0 247.0V257.6M583.1 245.6V261.0M584.3 247.3V257.7M585.5 242.2V254.9M586.6 254.5V266.3M587.8 242.3V265.5M589.0 231.3V249.6M590.1 231.4V242.4M591.3 225.6V244.2M592.5 231.8V244.3M593.7 243.1V256.0M594.8 251.3V270.5M596.0 267.5V282.0M597.2 272.5V284.1M598.3 272.7V280.7M599.5 270.6V277.4M600.7 266.3V276.1M601.8 272.1V277.7M603.0 267.1V273.1M604.2 267.1V273.1M605.4 266.6V274.8M606.5 261.7V272.4M607.7 262.0V268.6M608.9 267.7V273.0M610.0 263.5V272.1M611.2 263.9V270.0M612.4 267.5V276.3M613.5 272.0V282.3M614.7 273.8V284.6M615.9 279.4V293.6M617.1 289.7V303.9M618.2 303.5V346.6M619.4 337.7V351.5M620.6 341.8V352.6M621.7 331.1V343.9M622.9 334.8V343.9M624.1 328.6V337.1M625.2 328.5V337.9M626.4 329.1V339.6M627.6 336.4V344.5M628.8 336.9V348.5M629.9 337.1V343.4M631.1 335.1V340.9M632.3 334.2V344.4M633.4 333.2V343.7M634.6 335.2V348.3M635.8 344.6V356.1M636.9 340.6V354.7M638.1 344.7V353.7M639.3 340.3V347.8M640.5 335.5V342.8M641.6 335.4V343.5M642.8 328.0V340.0M644.0 326.0V334.3M645.1 321.5V335.9M646.3 322.6V333.0M647.5 329.5V342.0M648.6 333.7V339.8M649.8 338.9V346.8M651.0 338.6V347.6M652.2 344.7V350.9M653.3 338.5V346.9M654.5 338.6V347.1M655.7 326.0V339.0M656.8 316.0V326.4M658.0 308.3V321.8M659.2 300.9V310.2M660.3 295.5V306.9M661.5 298.3V304.3M662.7 291.0V299.6M663.9 287.8V296.3M665.0 280.7V289.0M666.2 282.1V287.0M667.4 280.6V288.7M668.5 280.6V285.8M669.7 280.6V287.3M670.9 281.6V287.5M672.0 286.8V296.9M673.2 289.8V298.5M674.4 291.7V308.8M675.6 281.3V292.3M676.7 283.0V299.1M677.9 285.7V294.3M679.1 287.9V297.6M680.2 287.6V297.2M681.4 282.7V293.6M682.6 276.4V289.0M683.7 271.6V282.5M684.9 271.9V280.0M686.1 277.8V282.6M687.3 281.0V288.6M688.4 284.2V291.8M689.6 286.9V300.7M690.8 284.0V291.1M691.9 274.3V285.5M693.1 269.5V280.0M694.3 269.6V277.9M695.4 269.6V278.5M696.6 276.5V286.1M697.8 284.4V294.6M699.0 291.2V301.5M700.1 301.1V311.3M701.3 308.8V319.9M702.5 305.6V319.4M703.6 293.8V306.0M704.8 290.6V299.5M706.0 291.4V297.2M707.1 290.5V295.8M708.3 287.1V294.9M709.5 286.1V295.3M710.7 277.6V292.9M711.8 268.2V281.0M713.0 268.9V278.2M714.2 265.4V275.6M715.3 266.4V274.6M716.5 267.2V274.9M717.7 269.3V274.7M718.8 264.2V272.1M720.0 261.8V271.6M721.2 267.8V275.7M722.4 269.6V273.6M129.2 373.3V385.8M133.3 370.6V378.9M137.5 368.6V374.7M140.3 369.2V381.7M143.1 384.4V405.3M145.8 378.9V399.7M148.6 370.6V387.2M151.4 374.7V387.2M154.2 371.9V384.4M156.9 362.2V373.3M158.9 345.6V365.0M162.5 334.4V345.6M165.3 331.7V338.6M168.1 305.3V323.3M170.8 312.2V321.9M173.6 313.6V327.5M175.8 312.2V328.9M177.8 326.1V351.1M180.6 328.9V341.4M183.3 323.3V335.8M186.1 326.1V335.8M188.9 321.9V331.7M191.7 328.9V338.6M194.4 331.7V341.4M197.2 337.2V345.6M200.0 342.8V359.4M202.8 345.6V369.2M205.6 331.7V345.6M208.3 330.3V342.8M211.1 326.1V337.2M213.9 321.9V331.7M216.7 331.7V341.4M219.4 340.0V352.5M222.2 349.7V370.6M225.0 346.9V360.8M227.8 356.7V370.6M230.6 365.0V384.4M233.3 373.3V396.9M236.1 370.6V384.4M238.9 369.2V378.9M241.7 367.8V376.1M244.4 366.4V374.7M247.2 369.2V377.5M250.0 369.2V383.1M252.8 365.0V376.1M255.6 351.1V367.8M258.3 340.0V365.0M259.7 315.0V345.6M262.5 317.8V327.5M265.3 319.2V327.5M268.1 323.3V334.4M270.8 326.1V335.8M273.6 324.7V334.4M276.4 326.1V338.6M279.2 328.9V345.6M280.0 326.1V345.6M282.8 306.7V331.7M285.0 284.4V320.6M286.9 278.9V306.7M289.7 273.3V295.6M293.9 267.8V284.4M299.4 273.3V290.0M305.0 276.1V290.0M309.2 281.7V295.6M312.8 287.2V305.3M316.1 287.2V302.5M319.4 287.2V300.6M323.1 278.9V291.4M330.0 276.1V290.0M335.6 284.4V298.3M338.9 287.2V301.7M341.7 287.2V300.6M345.3 278.9V291.4M349.4 284.4V295.6M352.2 287.2V300.0M355.0 278.9V291.4M360.6 276.1V290.0M364.7 287.2V301.1M366.7 290.0V306.7M367.8 298.3V331.7M368.9 317.8V370.6M370.3 323.3V359.4M371.7 312.2V376.1M373.1 303.9V342.8M374.4 301.1V317.8M377.2 303.9V312.2M379.4 290.0V310.8M381.4 281.7V298.3M385.6 267.8V284.4M471.1 85.0V123.9M472.8 86.4V112.8M474.7 87.8V107.2M476.7 83.6V108.6M478.3 80.8V101.7M480.3 78.1V96.1M481.7 78.1V129.4M483.1 126.7V157.2M484.4 143.3V176.7M485.8 165.6V204.4M487.8 154.4V176.7M490.0 143.3V165.6M491.9 151.7V171.1M494.2 154.4V165.6M496.1 148.9V165.6M498.3 121.1V154.4M500.3 126.7V151.7M502.5 143.3V165.6M504.4 129.4V160.0M506.1 151.7V173.9M507.2 165.6V198.9M508.1 162.8V179.4M510.0 137.8V171.1M512.2 135.0V151.7M514.4 137.8V148.9M516.4 140.6V153.1M518.3 129.4V146.1M520.6 125.3V136.4M523.3 123.9V135.0M526.1 115.6V132.2M528.3 105.8V121.1M529.7 98.9V115.6M531.7 112.8V133.6M533.9 129.4V160.0M535.8 132.2V148.9M537.8 126.7V143.3M540.0 123.9V136.4M542.2 122.5V135.0M544.2 121.1V137.8M546.1 132.2V154.4M547.8 146.1V171.1M549.7 168.3V182.2M551.7 179.4V193.3M553.3 180.8V203.1M554.4 185.0V218.3M556.7 179.4V210.0M559.4 173.9V201.7M561.1 165.6V190.6M562.2 171.1V212.8M563.1 201.7V235.0M564.4 226.7V251.7M565.6 240.6V272.5M567.2 246.1V265.6M569.2 237.8V254.4M571.1 232.2V247.5M572.8 225.3V243.3M574.7 235.0V251.7M576.7 243.3V257.2M578.9 247.5V264.2M581.1 244.7V265.6M583.1 243.3V262.8M585.0 237.8V260.0M587.2 241.9V275.3M589.2 229.4V251.7M591.4 221.1V244.7M593.3 235.0V257.2M595.0 251.7V276.7M596.4 268.3V286.4M598.3 271.1V283.6M600.6 265.6V279.4M602.5 268.3V279.4M604.7 260.0V276.7M606.7 258.6V272.5M608.9 264.2V276.7M610.8 260.0V272.5M612.8 265.6V279.4M615.0 273.9V290.6M616.9 282.2V304.4M618.1 323.3V351.1M619.2 334.4V363.6M621.1 328.9V351.1M623.3 327.5V342.8M625.6 326.1V338.6M627.5 331.7V345.6M629.4 334.4V351.1M631.7 333.1V345.6M633.9 331.7V345.6M635.8 335.8V359.4M637.8 342.8V356.7M640.0 334.4V351.1M642.2 328.9V345.6M644.2 320.6V342.8M646.1 319.2V340.0M648.3 331.7V346.9M650.6 337.2V351.1M652.5 340.0V353.9M654.4 331.7V348.3M656.1 317.8V334.4M658.1 303.9V321.9M660.0 295.6V312.2M662.2 287.2V302.5M664.4 280.3V295.6M666.4 277.5V290.0M668.6 276.1V288.6M670.6 278.9V291.4M672.5 281.7V299.7M674.2 287.2V310.8M676.1 276.1V299.7M678.3 287.2V299.7M680.3 285.8V298.3M682.2 278.9V295.6M683.6 263.6V284.4M685.3 273.3V281.7M687.2 278.9V291.4M689.2 283.1V303.9M691.4 276.1V292.8M693.3 267.8V281.7M695.0 266.4V278.9M696.9 273.3V291.4M698.9 287.2V305.3M700.6 301.1V319.2M701.7 309.4V328.9M703.3 292.8V312.2M705.3 288.6V302.5M707.2 287.2V299.7M709.4 285.8V299.7M711.1 267.8V292.8M713.1 266.4V281.7M715.0 263.6V274.7M717.2 265.0V276.1M719.2 258.1V271.9M721.1 265.0V276.1M722.5 267.8V277.5" stroke="#2ca53c" stroke-width="1.0" fill="none"/><path d="M129.2 377.0V382.2M129.8 376.4V381.4M130.4 375.8V380.6M131.0 375.2V379.8M131.6 374.6V379.0M132.2 374.0V378.2M132.8 373.4V377.4M133.4 372.8V376.6M134.0 372.4V376.1M134.6 372.0V375.6M135.2 371.6V375.2M135.8 371.2V374.7M136.4 370.8V374.2M137.0 370.4V373.7M137.6 370.2V373.4M138.2 370.7V374.4M138.8 371.3V375.4M139.4 371.9V376.5M140.0 372.5V377.5M140.6 374.7V380.2M141.2 378.6V384.7M141.8 382.5V389.2M142.4 386.4V393.6M143.0 390.3V398.1M143.6 389.9V397.8M144.2 388.7V396.6M144.8 387.5V395.4M145.4 386.3V394.2M146.0 384.9V392.7M146.6 382.8V390.3M147.2 380.7V387.9M147.8 378.6V385.5M148.4 376.5V383.1M149.0 376.0V382.3M149.6 376.6V382.6M150.2 377.2V382.9M150.8 377.8V383.3M151.4 378.4V383.6M152.0 377.8V383.0M152.6 377.2V382.4M153.2 376.6V381.8M153.8 376.0V381.2M154.4 374.9V380.0M155.0 372.7V377.7M155.6 370.5V375.4M156.2 368.3V373.1M156.8 366.1V370.8M157.4 362.4V367.7M158.0 358.1V364.3M158.6 353.9V360.8M159.2 350.5V357.7M159.8 348.2V355.0M160.4 345.9V352.2M161.0 343.5V349.4M161.6 341.2V346.7M162.2 338.9V343.9M162.8 337.2V341.8M163.4 336.3V340.7M164.0 335.4V339.5M164.6 334.5V338.3M165.2 333.6V337.1M165.8 329.4V333.5M166.4 324.6V329.4M167.0 319.7V325.3M167.6 314.8V321.1M168.2 311.0V317.9M168.8 311.9V318.2M169.4 312.8V318.5M170.0 313.6V318.8M170.6 314.5V319.1M171.2 315.3V319.7M171.8 315.9V320.6M172.4 316.5V321.5M173.0 317.1V322.4M173.6 317.7V323.3M174.2 317.6V323.5M174.8 317.5V323.6M175.4 317.4V323.7M176.0 318.4V325.2M176.6 323.6V331.1M177.2 328.8V337.1M177.8 333.9V343.1M178.4 333.7V342.1M179.0 333.4V340.9M179.6 333.1V339.7M180.2 332.7V338.5M180.8 332.1V337.3M181.4 330.9V336.1M182.0 329.7V334.9M182.6 328.5V333.7M183.2 327.3V332.5M183.8 327.3V332.3M184.4 327.7V332.5M185.0 328.1V332.7M185.6 328.5V332.9M186.2 328.7V333.0M186.8 327.8V332.1M187.4 326.9V331.2M188.0 326.0V330.3M188.6 325.1V329.4M189.2 325.3V329.7M189.8 326.8V331.2M190.4 328.3V332.7M191.0 329.8V334.2M191.6 331.3V335.7M192.2 332.1V336.4M192.8 332.7V337.0M193.4 333.3V337.6M194.0 333.9V338.2M194.6 334.6V338.9M195.2 335.7V339.9M195.8 336.8V340.9M196.4 337.9V341.9M197.0 339.0V342.9M197.6 340.5V344.7M198.2 342.3V347.1M198.8 344.1V349.5M199.4 345.9V351.9M200.0 347.7V354.2M200.6 348.9V355.9M201.2 350.0V357.5M201.8 351.1V359.1M202.4 352.2V360.6M203.0 351.8V360.4M203.6 348.1V356.0M204.2 344.4V351.6M204.8 340.7V347.2M205.4 337.0V342.8M206.0 335.5V341.1M206.6 335.1V340.6M207.2 334.7V340.1M207.8 334.3V339.6M208.4 333.9V339.1M209.0 332.9V338.0M209.6 331.9V336.9M210.2 330.9V335.8M210.8 329.9V334.7M211.4 328.9V333.6M212.0 327.9V332.5M212.6 326.9V331.4M213.2 325.9V330.3M213.8 324.9V329.2M214.4 326.3V330.6M215.0 328.4V332.7M215.6 330.5V334.8M216.2 332.6V336.9M216.8 334.7V339.0M217.4 336.7V341.2M218.0 338.7V343.4M218.6 340.7V345.6M219.2 342.7V347.8M219.8 345.1V350.6M220.4 347.8V353.9M221.0 350.5V357.2M221.6 353.2V360.5M222.2 356.0V363.8M222.8 355.2V362.6M223.4 354.1V361.0M224.0 353.0V359.4M224.6 351.9V357.9M225.2 351.6V357.3M225.8 353.7V359.4M226.4 355.8V361.5M227.0 357.9V363.6M227.6 360.0V365.7M228.2 362.2V368.1M228.8 364.4V370.7M229.4 366.6V373.3M230.0 368.8V375.9M230.6 371.1V378.5M231.2 373.2V380.9M231.8 375.3V383.3M232.4 377.4V385.7M233.0 379.5V388.1M233.6 380.3V388.7M234.2 378.9V386.8M234.8 377.6V384.8M235.4 376.3V382.8M236.0 375.0V380.8M236.6 374.2V379.6M237.2 373.6V378.7M237.8 373.0V377.9M238.4 372.4V377.0M239.0 371.8V376.1M239.6 371.4V375.6M240.2 371.0V375.1M240.8 370.6V374.6M241.4 370.2V374.1M242.0 369.9V373.7M242.6 369.6V373.4M243.2 369.3V373.1M243.8 369.0V372.8M244.4 368.7V372.5M245.0 369.1V373.0M245.6 369.7V373.6M246.2 370.3V374.2M246.8 370.9V374.8M247.4 371.5V375.5M248.0 371.9V376.2M248.6 372.3V377.0M249.2 372.7V377.8M249.8 373.1V378.6M250.4 372.6V378.1M251.0 371.5V376.8M251.6 370.4V375.5M252.2 369.3V374.3M252.8 368.2V373.0M253.4 365.6V370.8M254.0 363.0V368.6M254.6 360.4V366.4M255.2 357.9V364.1M255.8 355.5V362.3M256.4 353.8V361.1M257.0 352.0V359.9M257.6 350.2V358.6M258.2 348.4V357.4M258.8 340.7V350.4M259.4 330.7V341.2M260.0 324.4V334.8M260.6 323.5V332.4M261.2 322.6V330.1M261.8 321.6V327.7M262.4 320.7V325.3M263.0 320.6V324.9M263.6 320.8V325.0M264.2 321.0V325.1M264.8 321.2V325.2M265.4 321.6V325.5M266.0 322.7V326.8M266.6 323.8V328.1M267.2 324.9V329.3M267.8 326.0V330.6M268.4 326.8V331.5M269.0 327.3V331.9M269.6 327.8V332.3M270.2 328.3V332.7M270.8 328.8V333.1M271.4 328.6V332.9M272.0 328.3V332.6M272.6 328.0V332.3M273.2 327.7V332.0M273.8 327.6V331.9M274.4 328.1V332.6M275.0 328.6V333.3M275.6 329.1V334.0M276.2 329.6V334.7M276.8 330.3V335.7M277.4 331.2V336.9M278.0 332.1V338.1M278.6 333.0V339.3M279.2 334.0V340.5M279.8 332.6V339.8M280.4 329.8V337.5M281.0 326.0V334.1M281.6 322.2V330.6M282.2 318.4V327.2M282.8 314.6V323.8M283.4 309.7V319.8M284.0 304.7V315.8M284.6 299.7V311.8M285.2 295.4V307.9M285.8 292.8V304.5M286.4 290.2V301.1M287.0 287.7V297.7M287.6 286.1V295.8M288.2 284.5V293.8M288.8 282.8V291.8M289.4 281.2V289.8M290.0 279.9V288.1M290.6 278.8V286.7M291.2 277.7V285.4M291.8 276.6V284.1M292.4 275.6V282.7M293.0 274.5V281.4M293.6 273.4V280.1M294.2 273.1V279.7M294.8 273.7V280.3M295.4 274.3V280.9M296.0 274.9V281.5M296.6 275.5V282.1M297.2 276.1V282.7M297.8 276.7V283.3M298.4 277.3V283.9M299.0 277.9V284.5M299.6 278.4V285.0M300.2 278.6V285.1M300.8 278.8V285.2M301.4 279.0V285.3M302.0 279.2V285.4M302.6 279.4V285.5M303.2 279.6V285.6M303.8 279.8V285.7M304.4 280.0V285.8M305.0 280.2V285.9M305.6 281.0V286.6M306.2 281.8V287.4M306.8 282.6V288.2M307.4 283.4V289.0M308.0 284.2V289.8M308.6 285.0V290.6M309.2 285.8V291.4M309.8 286.9V292.8M310.4 288.1V294.2M311.0 289.3V295.6M311.6 290.4V297.0M312.2 291.6V298.3M312.8 292.7V299.7M313.4 292.6V299.4M314.0 292.4V299.1M314.6 292.3V298.8M315.2 292.1V298.4M315.8 291.9V298.1M316.4 291.8V297.8M317.0 291.6V297.6M317.6 291.5V297.3M318.2 291.4V297.1M318.8 291.3V296.9M319.4 291.2V296.7M320.0 289.9V295.3M320.6 288.5V293.9M321.2 287.0V292.4M321.8 285.6V290.9M322.4 284.2V289.4M323.0 282.8V288.0M323.6 282.4V287.6M324.2 282.2V287.4M324.8 282.0V287.3M325.4 281.8V287.1M326.0 281.6V287.0M326.6 281.4V286.8M327.2 281.2V286.6M327.8 281.0V286.5M328.4 280.8V286.3M329.0 280.6V286.2M329.6 280.4V286.0M330.2 280.5V286.1M330.8 281.4V287.0M331.4 282.3V287.9M332.0 283.2V288.8M332.6 284.1V289.7M333.2 285.0V290.6M333.8 285.9V291.5M334.4 286.8V292.4M335.0 287.7V293.3M335.6 288.6V294.2M336.2 289.1V294.8M336.8 289.6V295.4M337.4 290.2V295.9M338.0 290.7V296.5M338.6 291.2V297.1M339.2 291.5V297.3M339.8 291.4V297.1M340.4 291.3V297.0M341.0 291.3V296.8M341.6 291.2V296.6M342.2 290.0V295.4M342.8 288.5V293.9M343.4 287.1V292.4M344.0 285.7V291.0M344.6 284.2V289.5M345.2 282.8V288.0M345.8 283.1V288.3M346.4 283.9V289.0M347.0 284.6V289.6M347.6 285.3V290.3M348.2 286.1V291.0M348.8 286.8V291.6M349.4 287.5V292.3M350.0 288.3V293.1M350.6 289.0V293.9M351.2 289.7V294.8M351.8 290.4V295.6M352.4 290.5V295.8M353.0 288.7V294.0M353.6 286.9V292.1M354.2 285.1V290.3M354.8 283.2V288.5M355.4 282.4V287.6M356.0 282.1V287.4M356.6 281.9V287.2M357.2 281.6V287.0M357.8 281.4V286.8M358.4 281.1V286.6M359.0 280.9V286.4M359.6 280.6V286.2M360.2 280.4V286.0M360.8 280.8V286.4M361.4 282.4V288.0M362.0 284.0V289.6M362.6 285.6V291.2M363.2 287.2V292.8M363.8 288.8V294.4M364.4 290.4V296.0M365.0 291.8V297.6M365.6 293.0V299.0M366.2 294.1V300.4M366.8 296.3V303.3M367.4 303.9V313.8M368.0 313.5V326.4M368.6 327.6V343.9M369.2 335.1V352.1M369.8 335.1V349.8M370.4 334.9V348.2M371.0 334.2V351.3M371.6 333.5V354.5M372.2 327.3V346.0M372.8 320.0V335.3M373.4 314.2V326.2M374.0 309.7V318.7M374.6 306.2V312.6M375.2 306.2V312.0M375.8 306.2V311.4M376.4 306.1V310.8M377.0 306.1V310.2M377.6 304.6V309.1M378.2 302.0V307.6M378.8 299.4V306.1M379.4 296.8V304.5M380.0 293.9V301.4M380.6 290.9V298.0M381.2 287.8V294.5M381.8 285.5V292.0M382.4 283.5V290.0M383.0 281.5V288.0M383.6 279.5V286.0M384.2 277.5V284.0M384.8 275.5V282.0M385.4 273.5V280.0M386.0 272.0V278.6M386.6 270.8V277.4M387.2 269.5V276.2M387.8 268.3V275.0M388.4 267.1V273.9M389.0 265.9V272.7M389.6 264.6V271.5M390.2 263.4V270.3M390.8 262.2V269.1M391.4 260.9V268.0M392.0 259.7V266.8M392.6 258.5V265.6M393.2 257.3V264.4M393.8 256.0V263.2M394.4 254.8V262.1M395.0 253.6V260.9M395.6 252.3V259.7M396.2 251.1V258.5M396.8 249.9V257.3M397.4 248.7V256.2M398.0 247.4V255.0M398.6 246.2V253.8M399.2 245.0V252.6M399.8 243.7V251.5M400.4 242.5V250.3M401.0 241.3V249.1M401.6 240.1V247.9M402.2 238.8V246.7M402.8 237.6V245.6M403.4 236.4V244.4M404.0 235.1V243.2M404.6 233.9V242.0M405.2 232.7V240.8M405.8 231.5V239.7M406.4 230.2V238.5M407.0 229.0V237.3M407.6 227.8V236.1M408.2 226.5V234.9M408.8 225.3V233.8M409.4 224.1V232.6M410.0 222.8V231.4M410.6 221.6V230.2M411.2 220.4V229.1M411.8 219.2V227.9M412.4 217.9V226.7M413.0 216.7V225.5M413.6 215.5V224.3M414.2 214.2V223.2M414.8 213.0V222.0M415.4 211.8V220.8M416.0 210.6V219.6M416.6 209.3V218.4M417.2 208.1V217.3M417.8 206.9V216.1M418.4 205.6V214.9M419.0 204.4V213.7M419.6 203.2V212.5M420.2 202.0V211.4M420.8 200.7V210.2M421.4 199.5V209.0M422.0 198.3V207.8M422.6 197.0V206.7M423.2 195.8V205.5M423.8 194.6V204.3M424.4 193.4V203.1M425.0 192.1V201.9M425.6 190.9V200.8M426.2 189.7V199.6M426.8 188.4V198.4M427.4 187.2V197.2M428.0 186.0V196.0M428.6 184.8V194.9M429.2 183.5V193.7M429.8 182.3V192.5M430.4 181.1V191.3M431.0 179.8V190.1M431.6 178.6V189.0M432.2 177.4V187.8M432.8 176.2V186.6M433.4 174.9V185.4M434.0 173.7V184.3M434.6 172.5V183.1M435.2 171.2V181.9M435.8 170.0V180.7M436.4 168.8V179.5M437.0 167.6V178.4M437.6 166.3V177.2M438.2 165.1V176.0M438.8 163.9V174.8M439.4 162.6V173.6M440.0 161.4V172.5M440.6 160.2V171.3M441.2 158.9V170.1M441.8 157.7V168.9M442.4 156.5V167.7M443.0 155.3V166.6M443.6 154.0V165.4M444.2 152.8V164.2M444.8 151.6V163.0M445.4 150.3V161.9M446.0 149.1V160.7M446.6 147.9V159.5M447.2 146.7V158.3M447.8 145.4V157.1M448.4 144.2V156.0M449.0 143.0V154.8M449.6 141.7V153.6M450.2 140.5V152.4M450.8 139.3V151.2M451.4 138.1V150.1M452.0 136.8V148.9M452.6 135.6V147.7M453.2 134.4V146.5M453.8 133.1V145.3M454.4 131.9V144.2M455.0 130.7V143.0M455.6 129.5V141.8M456.2 128.2V140.6M456.8 127.0V139.5M457.4 125.8V138.3M458.0 124.5V137.1M458.6 123.3V135.9M459.2 122.1V134.7M459.8 120.9V133.6M460.4 119.6V132.4M461.0 118.4V131.2M461.6 117.2V130.0M462.2 115.9V128.8M462.8 114.7V127.7M463.4 113.5V126.5M464.0 112.3V125.3M464.6 111.0V124.1M465.2 109.8V122.9M465.8 108.6V121.8M466.4 107.3V120.6M467.0 106.1V119.4M467.6 104.9V118.2M468.2 103.7V117.1M468.8 102.4V115.9M469.4 101.2V114.7M470.0 100.0V113.5M470.6 98.7V112.3M471.2 97.5V111.0M471.8 96.5V108.6M472.4 95.5V106.1M473.0 94.7V104.1M473.6 94.4V103.1M474.2 94.1V102.1M474.8 93.7V101.2M475.4 93.0V101.0M476.0 92.3V100.9M476.6 91.6V100.7M477.2 90.3V99.1M477.8 88.7V97.1M478.4 87.3V95.1M479.0 86.1V93.7M479.6 85.0V92.3M480.2 83.8V90.8M480.8 87.6V98.3M481.4 92.5V107.8M482.0 103.9V120.1M482.6 121.8V135.2M483.2 137.9V148.9M483.8 145.5V156.9M484.4 153.1V164.9M485.0 163.1V175.7M485.6 173.5V186.9M486.2 175.3V188.0M486.8 170.1V181.2M487.4 164.9V174.4M488.0 160.5V168.8M488.6 157.5V165.8M489.2 154.5V162.8M489.8 151.5V159.8M490.4 151.7V159.8M491.0 154.0V161.8M491.6 156.2V163.8M492.2 157.7V164.8M492.8 157.7V164.1M493.4 157.6V163.4M494.0 157.6V162.6M494.6 156.9V162.0M495.2 155.7V161.4M495.8 154.6V160.8M496.4 151.4V158.6M497.0 145.4V154.0M497.6 139.5V149.5M498.2 133.5V145.0M498.8 132.5V143.7M499.4 133.3V143.7M500.0 134.1V143.8M500.6 136.6V145.7M501.2 140.9V149.7M501.8 145.1V153.7M502.4 149.3V157.7M503.0 147.6V156.6M503.6 144.2V154.0M504.2 140.8V151.4M504.8 143.0V153.4M505.4 150.0V159.5M506.0 156.9V165.5M506.6 165.9V175.6M507.2 175.4V187.1M507.8 170.8V179.2M508.4 164.8V172.1M509.0 158.8V167.8M509.6 152.8V163.5M510.2 147.9V159.3M510.8 145.6V155.6M511.4 143.3V151.9M512.0 141.0V148.2M512.6 140.2V146.5M513.2 140.4V146.2M513.8 140.7V146.0M514.4 140.9V145.7M515.0 141.8V146.7M515.6 142.8V147.8M516.2 143.8V149.0M516.8 142.3V147.8M517.4 139.3V145.2M518.0 136.3V142.6M518.6 133.9V140.2M519.2 132.2V138.1M519.8 130.6V136.0M520.4 129.0V133.9M521.0 128.2V133.0M521.6 127.9V132.7M522.2 127.6V132.4M522.8 127.3V132.1M523.4 127.0V131.8M524.0 125.6V130.8M524.6 124.2V129.8M525.2 122.8V128.7M525.8 121.4V127.7M526.4 119.4V125.9M527.0 116.7V123.1M527.6 113.9V120.2M528.2 111.2V117.3M528.8 108.4V114.6M529.4 105.6V112.0M530.0 105.9V112.6M530.6 110.6V117.7M531.2 115.3V122.8M531.8 120.2V128.2M532.4 125.6V134.4M533.0 130.9V140.6M533.6 136.3V146.9M534.2 139.0V149.3M534.8 138.4V147.3M535.4 137.8V145.4M536.0 136.9V143.4M536.6 135.2V141.7M537.2 133.5V140.0M537.8 131.8V138.3M538.4 130.6V136.8M539.0 129.5V135.3M539.6 128.4V133.8M540.2 127.4V132.6M540.8 127.1V132.3M541.4 126.7V131.9M542.0 126.3V131.5M542.6 126.2V131.6M543.2 126.2V132.0M543.8 126.2V132.4M544.4 127.5V134.2M545.0 131.5V138.8M545.6 135.5V143.4M546.2 139.7V148.0M546.8 145.0V153.7M547.4 150.4V159.3M548.0 155.8V164.7M548.6 161.5V169.3M549.2 167.2V173.8M549.8 172.7V178.4M550.4 176.1V181.8M551.0 179.6V185.2M551.6 183.0V188.6M552.2 184.8V191.3M552.8 186.4V193.8M553.4 188.0V196.4M554.0 192.3V202.7M554.6 195.4V207.2M555.2 193.6V205.2M555.8 191.9V203.2M556.4 190.1V201.2M557.0 188.5V199.4M557.6 187.1V197.8M558.2 185.7V196.2M558.8 184.3V194.6M559.4 182.9V193.0M560.0 179.8V189.6M560.6 176.5V186.0M561.2 174.0V183.5M561.8 180.1V192.4M562.4 189.5V203.6M563.0 209.4V221.6M563.6 220.6V231.4M564.2 230.1V239.9M564.8 239.3V249.1M565.4 248.1V259.1M566.0 251.1V261.6M566.6 251.6V260.6M567.2 252.1V259.6M567.8 249.5V256.7M568.4 246.7V253.6M569.0 243.8V250.4M569.6 241.6V248.0M570.2 239.7V246.0M570.8 237.9V244.1M571.4 235.9V242.1M572.0 233.7V240.3M572.6 231.6V238.4M573.2 232.7V239.6M573.8 235.5V242.3M574.4 238.4V245.0M575.0 241.0V247.4M575.6 243.3V249.4M576.2 245.6V251.4M576.8 247.7V253.4M577.4 249.1V255.0M578.0 250.4V256.6M578.6 251.8V258.2M579.2 252.4V259.1M579.8 252.0V259.1M580.4 251.7V259.1M581.0 251.3V259.1M581.6 250.8V258.5M582.2 250.2V257.8M582.8 249.6V257.1M583.4 248.6V256.2M584.0 247.2V255.0M584.6 245.8V253.9M585.2 245.3V253.9M585.8 247.5V257.0M586.4 249.6V260.1M587.0 251.8V263.2M587.6 249.8V261.0M588.2 244.8V254.9M588.8 239.7V248.8M589.4 235.7V244.0M590.0 233.6V242.0M590.6 231.4V240.0M591.2 229.3V238.0M591.8 231.1V239.8M592.4 235.3V243.8M593.0 239.4V247.8M593.6 244.4V252.9M594.2 250.8V259.5M594.8 257.1V266.2M595.4 263.3V272.0M596.0 269.5V277.2M596.6 274.0V280.8M597.2 274.2V280.5M597.8 274.5V280.2M598.4 274.7V279.9M599.0 273.3V278.6M599.6 271.9V277.4M600.2 270.6V276.1M600.8 269.9V275.4M601.4 270.4V275.7M602.0 271.0V276.0M602.6 271.3V276.1M603.2 269.6V274.9M603.8 267.8V273.6M604.4 266.1V272.3M605.0 264.8V271.2M605.6 264.1V270.2M606.2 263.3V269.2M606.8 263.0V268.6M607.4 264.3V269.8M608.0 265.7V271.1M608.6 267.1V272.3M609.2 267.2V272.4M609.8 265.9V271.1M610.4 264.6V269.8M611.0 264.1V269.3M611.6 265.9V271.3M612.2 267.8V273.3M612.8 269.6V275.3M613.4 272.1V278.0M614.0 274.6V280.8M614.6 277.1V283.5M615.2 279.8V286.5M615.8 283.0V290.2M616.4 286.1V293.9M617.0 290.0V298.4M617.6 313.3V322.6M618.2 333.3V343.5M618.8 339.6V350.0M619.4 342.9V353.3M620.0 340.5V350.1M620.6 338.1V347.0M621.2 335.8V344.0M621.8 334.7V342.4M622.4 333.7V340.8M623.0 332.7V339.2M623.6 331.8V337.8M624.2 331.2V337.0M624.8 330.6V336.1M625.4 330.0V335.2M626.0 331.0V336.3M626.6 332.9V338.3M627.2 334.8V340.3M627.8 336.3V342.1M628.4 337.4V343.5M629.0 338.6V344.9M629.6 339.4V345.8M630.2 338.6V344.7M630.8 337.8V343.6M631.4 337.1V342.5M632.0 336.6V341.8M632.6 336.3V341.7M633.2 336.1V341.6M633.8 335.8V341.5M634.4 337.6V344.0M635.0 339.9V347.3M635.6 342.2V350.6M636.2 343.9V352.1M636.8 345.0V352.3M637.4 346.1V352.4M638.0 346.3V352.0M638.6 344.3V350.2M639.2 342.3V348.5M639.8 340.3V346.7M640.4 338.6V345.1M641.0 337.1V343.6M641.6 335.6V342.1M642.2 334.1V340.6M642.8 332.2V339.2M643.4 330.2V337.7M644.0 328.2V336.3M644.6 327.1V335.3M645.2 326.6V334.6M645.8 326.0V333.9M646.4 326.9V334.5M647.0 329.7V336.9M647.6 332.6V339.3M648.2 335.5V341.7M648.8 337.3V343.3M649.4 338.6V344.5M650.0 340.0V345.8M650.6 341.4V347.0M651.2 342.2V347.9M651.8 343.1V348.7M652.4 343.9V349.6M653.0 342.3V348.2M653.6 340.1V346.2M654.2 337.8V344.2M654.8 334.0V340.6M655.4 329.0V335.6M656.0 324.0V330.6M656.6 319.7V326.3M657.2 315.6V322.3M657.8 311.4V318.3M658.4 308.0V314.9M659.0 305.3V312.1M659.6 302.6V309.2M660.2 300.0V306.5M660.8 297.6V304.0M661.4 295.2V301.5M662.0 292.8V299.0M662.6 290.7V296.8M663.2 288.9V295.0M663.8 287.0V293.1M664.4 285.1V291.2M665.0 283.9V289.7M665.6 282.7V288.3M666.2 281.6V286.9M666.8 280.9V286.1M667.4 280.5V285.7M668.0 280.2V285.4M668.6 279.8V285.0M669.2 280.6V285.8M669.8 281.4V286.6M670.4 282.3V287.5M671.0 283.5V289.1M671.6 285.0V291.1M672.2 286.4V293.1M672.8 288.4V295.7M673.4 291.1V299.0M674.0 293.8V302.3M674.6 292.4V301.1M675.2 288.9V297.7M675.8 285.5V294.3M676.4 284.4V292.7M677.0 286.4V293.7M677.6 288.3V294.8M678.2 290.3V295.8M678.8 290.6V295.8M679.4 290.1V295.3M680.0 289.7V294.9M680.6 288.7V294.1M681.2 287.0V292.8M681.8 285.3V291.5M682.4 282.5V289.2M683.0 276.5V283.8M683.6 270.5V278.4M684.2 271.9V278.5M684.8 273.9V279.0M685.4 275.9V279.8M686.0 278.0V282.4M686.6 280.2V284.9M687.2 282.3V287.5M687.8 284.5V290.4M688.4 286.7V293.4M689.0 288.8V296.4M689.6 288.0V295.7M690.2 285.8V293.0M690.8 283.5V290.4M691.4 281.3V287.8M692.0 278.4V284.7M692.6 275.6V281.6M693.2 272.7V278.4M693.8 271.4V276.9M694.4 270.7V276.1M695.0 270.1V275.3M695.6 272.6V278.3M696.2 275.3V281.6M696.8 278.1V284.9M697.4 281.9V288.9M698.0 286.2V293.2M698.6 290.5V297.4M699.2 295.1V302.1M699.8 300.1V307.1M700.4 305.1V312.1M701.0 309.9V317.1M701.6 314.7V322.0M702.2 310.5V317.9M702.8 304.5V311.9M703.4 298.7V306.1M704.0 296.8V303.7M704.6 294.9V301.2M705.2 293.1V298.8M705.8 292.3V297.8M706.4 291.7V297.1M707.0 291.1V296.4M707.6 290.7V296.0M708.2 290.5V295.9M708.8 290.2V295.7M709.4 290.0V295.6M710.0 285.5V292.2M710.6 280.3V288.4M711.2 275.5V284.7M711.8 274.1V282.2M712.4 272.6V279.8M713.0 271.2V277.4M713.6 269.9V275.6M714.2 268.6V273.9M714.8 267.3V272.2M715.4 267.0V271.8M716.0 267.4V272.1M716.6 267.8V272.5M717.2 268.1V272.9M717.8 266.5V271.5M718.4 264.6V269.9M719.0 262.8V268.3M719.6 263.4V268.9M720.2 265.3V270.5M720.8 267.1V272.0M721.4 268.6V273.3M722.0 269.6V274.1" stroke="#2a9a38" stroke-width=".8" fill="none"/><path d="M129 275.6H726" stroke="#7c8088" stroke-width="1"/></svg>
<div class="t s" style="left:130.2px;top:63.6px;font-size:5.6px;color:#fff;background:#000;padding:0 1px 0 .6px;font-weight:bold;letter-spacing:-.12px">XAUUSD,H1&nbsp; 1361.75 1362.20 1358.05 1358.95</div>
<div class="t s" style="left:728.6px;top:74.1px;font-size:5.1px;font-weight:bold;color:#f4f4f4">1425.00</div>
<div class="a" style="left:726px;top:76.2px;width:2px;height:1px;background:#ddd"></div>
<div class="t s" style="left:728.6px;top:92.82px;font-size:5.1px;font-weight:bold;color:#f4f4f4">1418.70</div>
<div class="a" style="left:726px;top:94.92px;width:2px;height:1px;background:#ddd"></div>
<div class="t s" style="left:728.6px;top:111.54px;font-size:5.1px;font-weight:bold;color:#f4f4f4">1412.55</div>
<div class="a" style="left:726px;top:113.64px;width:2px;height:1px;background:#ddd"></div>
<div class="t s" style="left:728.6px;top:130.26px;font-size:5.1px;font-weight:bold;color:#f4f4f4">1406.25</div>
<div class="a" style="left:726px;top:132.36px;width:2px;height:1px;background:#ddd"></div>
<div class="t s" style="left:728.6px;top:148.98px;font-size:5.1px;font-weight:bold;color:#f4f4f4">1400.10</div>
<div class="a" style="left:726px;top:151.08px;width:2px;height:1px;background:#ddd"></div>
<div class="t s" style="left:728.6px;top:167.7px;font-size:5.1px;font-weight:bold;color:#f4f4f4">1393.80</div>
<div class="a" style="left:726px;top:169.8px;width:2px;height:1px;background:#ddd"></div>
<div class="t s" style="left:728.6px;top:186.42px;font-size:5.1px;font-weight:bold;color:#f4f4f4">1387.65</div>
<div class="a" style="left:726px;top:188.52px;width:2px;height:1px;background:#ddd"></div>
<div class="t s" style="left:728.6px;top:205.14px;font-size:5.1px;font-weight:bold;color:#f4f4f4">1381.50</div>
<div class="a" style="left:726px;top:207.24px;width:2px;height:1px;background:#ddd"></div>
<div class="t s" style="left:728.6px;top:223.86px;font-size:5.1px;font-weight:bold;color:#f4f4f4">1375.20</div>
<div class="a" style="left:726px;top:225.96px;width:2px;height:1px;background:#ddd"></div>
<div class="t s" style="left:728.6px;top:242.58px;font-size:5.1px;font-weight:bold;color:#f4f4f4">1369.05</div>
<div class="a" style="left:726px;top:244.68px;width:2px;height:1px;background:#ddd"></div>
<div class="t s" style="left:728.6px;top:261.3px;font-size:5.1px;font-weight:bold;color:#f4f4f4">1362.75</div>
<div class="a" style="left:726px;top:263.4px;width:2px;height:1px;background:#ddd"></div>
<div class="t s" style="left:728.6px;top:279.4px;font-size:5.1px;font-weight:bold;color:#f4f4f4">1356.60</div>
<div class="a" style="left:726px;top:281.5px;width:2px;height:1px;background:#ddd"></div>
<div class="t s" style="left:728.6px;top:298.15px;font-size:5.1px;font-weight:bold;color:#f4f4f4">1350.30</div>
<div class="a" style="left:726px;top:300.25px;width:2px;height:1px;background:#ddd"></div>
<div class="t s" style="left:728.6px;top:316.9px;font-size:5.1px;font-weight:bold;color:#f4f4f4">1344.15</div>
<div class="a" style="left:726px;top:319px;width:2px;height:1px;background:#ddd"></div>
<div class="t s" style="left:728.6px;top:335.65px;font-size:5.1px;font-weight:bold;color:#f4f4f4">1338.00</div>
<div class="a" style="left:726px;top:337.75px;width:2px;height:1px;background:#ddd"></div>
<div class="t s" style="left:728.6px;top:354.4px;font-size:5.1px;font-weight:bold;color:#f4f4f4">1331.70</div>
<div class="a" style="left:726px;top:356.5px;width:2px;height:1px;background:#ddd"></div>
<div class="t s" style="left:728.6px;top:373.15px;font-size:5.1px;font-weight:bold;color:#f4f4f4">1325.55</div>
<div class="a" style="left:726px;top:375.25px;width:2px;height:1px;background:#ddd"></div>
<div class="t s" style="left:728.6px;top:391.9px;font-size:5.1px;font-weight:bold;color:#f4f4f4">1319.25</div>
<div class="a" style="left:726px;top:394px;width:2px;height:1px;background:#ddd"></div>
<div class="t s" style="left:728.6px;top:410.65px;font-size:5.1px;font-weight:bold;color:#f4f4f4">1313.10</div>
<div class="a" style="left:726px;top:412.75px;width:2px;height:1px;background:#ddd"></div>
<div class="a" style="left:727.6px;top:272.4px;width:21.4px;height:6.4px;background:#f4f4f4"></div>
<div class="t s" style="left:728.6px;top:273px;font-size:5.1px;font-weight:bold;color:#111">1358.95</div>
<div class="t s" style="left:129px;top:417.7px;font-size:5.3px;font-weight:bold;color:#f4f4f4">21 Oct 2010</div>
<div class="a" style="left:128.2px;top:414.6px;width:1px;height:2.4px;background:#ddd"></div>
<div class="t s" style="left:166.4px;top:417.7px;font-size:5.3px;font-weight:bold;color:#f4f4f4">25 Oct 08:00</div>
<div class="a" style="left:165.6px;top:414.6px;width:1px;height:2.4px;background:#ddd"></div>
<div class="t s" style="left:203.8px;top:417.7px;font-size:5.3px;font-weight:bold;color:#f4f4f4">26 Oct 17:00</div>
<div class="a" style="left:203px;top:414.6px;width:1px;height:2.4px;background:#ddd"></div>
<div class="t s" style="left:241.2px;top:417.7px;font-size:5.3px;font-weight:bold;color:#f4f4f4">28 Oct 03:00</div>
<div class="a" style="left:240.4px;top:414.6px;width:1px;height:2.4px;background:#ddd"></div>
<div class="t s" style="left:278.6px;top:417.7px;font-size:5.3px;font-weight:bold;color:#f4f4f4">29 Oct 12:00</div>
<div class="a" style="left:277.8px;top:414.6px;width:1px;height:2.4px;background:#ddd"></div>
<div class="t s" style="left:316.2px;top:417.7px;font-size:5.3px;font-weight:bold;color:#f4f4f4">1 Nov 21:00</div>
<div class="a" style="left:315.4px;top:414.6px;width:1px;height:2.4px;background:#ddd"></div>
<div class="t s" style="left:353.6px;top:417.7px;font-size:5.3px;font-weight:bold;color:#f4f4f4">3 Nov 06:00</div>
<div class="a" style="left:352.8px;top:414.6px;width:1px;height:2.4px;background:#ddd"></div>
<div class="t s" style="left:391px;top:417.7px;font-size:5.3px;font-weight:bold;color:#f4f4f4">4 Nov 14:00</div>
<div class="a" style="left:390.2px;top:414.6px;width:1px;height:2.4px;background:#ddd"></div>
<div class="t s" style="left:428.4px;top:417.7px;font-size:5.3px;font-weight:bold;color:#f4f4f4">5 Nov 22:00</div>
<div class="a" style="left:427.6px;top:414.6px;width:1px;height:2.4px;background:#ddd"></div>
<div class="t s" style="left:465.8px;top:417.7px;font-size:5.3px;font-weight:bold;color:#f4f4f4">9 Nov 07:00</div>
<div class="a" style="left:465px;top:414.6px;width:1px;height:2.4px;background:#ddd"></div>
<div class="t s" style="left:503px;top:417.7px;font-size:5.3px;font-weight:bold;color:#f4f4f4">10 Nov 15:00</div>
<div class="a" style="left:502.2px;top:414.6px;width:1px;height:2.4px;background:#ddd"></div>
<div class="t s" style="left:540.4px;top:417.7px;font-size:5.3px;font-weight:bold;color:#f4f4f4">11 Nov 23:00</div>
<div class="a" style="left:539.6px;top:414.6px;width:1px;height:2.4px;background:#ddd"></div>
<div class="t s" style="left:577.8px;top:417.7px;font-size:5.3px;font-weight:bold;color:#f4f4f4">15 Nov 08:00</div>
<div class="a" style="left:577px;top:414.6px;width:1px;height:2.4px;background:#ddd"></div>
<div class="t s" style="left:615.4px;top:417.7px;font-size:5.3px;font-weight:bold;color:#f4f4f4">16 Nov 16:00</div>
<div class="a" style="left:614.6px;top:414.6px;width:1px;height:2.4px;background:#ddd"></div>
<div class="t s" style="left:652.8px;top:417.7px;font-size:5.3px;font-weight:bold;color:#f4f4f4">18 Nov 00:00</div>
<div class="a" style="left:652px;top:414.6px;width:1px;height:2.4px;background:#ddd"></div>
<div class="t s" style="left:690.2px;top:417.7px;font-size:5.3px;font-weight:bold;color:#f4f4f4">19 Nov 08:00</div>
<div class="a" style="left:689.4px;top:414.6px;width:1px;height:2.4px;background:#ddd"></div>
<div class="a" style="left:126.8px;top:425.4px;width:623.2px;height:11.6px;background:#f0eee2"></div>
<div class="a" style="left:126.8px;top:426.2px;width:623.2px;height:1px;background:#8a887c"></div>
<div class="t s" style="left:135.4px;top:429.5px;font-size:5.9px;color:#7c7a70">EURUSD...,M30</div>
<div class="t s" style="left:190.4px;top:429.5px;font-size:5.9px;color:#7c7a70">GBPUSD...,M30</div>
<div class="t s" style="left:245.8px;top:429.5px;font-size:5.9px;color:#7c7a70">XAUUSD,H4</div>
<div class="t s" style="left:291.2px;top:429.5px;font-size:5.9px;color:#7c7a70">AUDUSD...,M5</div>
<div class="t s" style="left:342.8px;top:429.5px;font-size:5.9px;color:#7c7a70">USDCHF...,H1</div>
<div class="a" style="left:182.8px;top:428.4px;width:1px;height:7px;background:#a8a598"></div>
<div class="a" style="left:237.6px;top:428.4px;width:1px;height:7px;background:#a8a598"></div>
<div class="a" style="left:285px;top:428.4px;width:1px;height:7px;background:#a8a598"></div>
<div class="a" style="left:336.2px;top:428.4px;width:1px;height:7px;background:#a8a598"></div>
<div class="a" style="left:388px;top:426.2px;width:47px;height:11px;background:#fff;border:1px solid #55534c;border-top:none"></div>
<div class="t s" style="left:395px;top:429.2px;font-size:5.9px;color:#111">XAUUSD,H1</div>
<div class="t s" style="left:732.6px;top:428.4px;font-size:5.4px;color:#8a887c;letter-spacing:6px">◂▸</div>
<div class="a" id="dlg">
<div class="a" style="left:0;top:0;width:323.6px;height:17.6px;border-radius:4px 4px 0 0;background:linear-gradient(#0a55e0 0,#2a78f0 7%,#0a5ae6 20%,#0956e2 55%,#1466f0 88%,#0e58e0 100%)"></div>
<div class="t" style="left:5.2px;top:5px;font-family:Liberation Serif,Noto Serif CJK SC,serif;font-size:7.9px;font-weight:bold;color:#fff;letter-spacing:.05px;text-shadow:.5px .5px .5px #0a2a8a">开新模拟帐号</div>
<div class="a" style="left:295.600px;top:3px;width:11.200px;height:12px;border:1px solid #d4e0fa;border-radius:2.500px;background:linear-gradient(135deg,#6a9af4,#2e64dc 55%,#1f52cc)"><div class="t s" style="left:1.800px;top:.4px;font-size:9.400px;font-weight:bold;color:#fff">?</div></div>
<div class="a" style="left:308.900px;top:3px;width:12.200px;height:12px;border:1px solid #f4e0da;border-radius:2.500px;background:linear-gradient(135deg,#f0907a,#de4e2c 55%,#c63e20)"><svg class="a" style="left:0;top:0" width="10.200" height="10" viewBox="0 0 10.200 10"><path d="M2.400 2.300L7.800 7.700M7.800 2.300L2.400 7.700" stroke="#fff" stroke-width="1.500"/></svg></div>
<div class="a" style="left:1.8px;top:17.6px;width:320px;height:202px;background:#ece9d8"></div>
<div class="a" style="left:1.8px;top:17.6px;width:320px;height:34px;background:#fff;border-bottom:1px solid #aca899"></div>
<div class="a" style="left:1.8px;top:51.6px;width:320px;height:1px;background:#fff"></div>
<div class="t s" style="left:15.4px;top:22.2px;font-size:7.3px;font-weight:bold;color:#000">个人资料</div>
<div class="t s" style="left:28.4px;top:31.8px;font-size:6.9px;color:#222">请用英文填写下列所有字段以开设新模拟帐户:</div>
<div class="lbl s" style="right:258.6px;top:67.7px;color:#222">名称:</div>
<div class="fld" style="left:70px;top:66.5px;width:242.2px;height:9.8px;"><div class="t m" style="top:1.4px">gongyangfeng</div></div>
<div class="lbl s" style="right:258.6px;top:83.5px;color:#222">国家:</div>
<div class="fld" style="left:70px;top:81.2px;width:88px;height:12px;"><div class="t m" style="top:2.4px">People's Republic of (</div><div class="cb"><svg class="a" style="left:1.500px;top:2.600px" width="5.400" height="4" viewBox="0 0 5.400 4"><path d="M.5 .7l2.200 2.200 2.200-2.200" stroke="#34509a" stroke-width="1.400" fill="none"/></svg></div></div>
<div class="lbl s" style="right:104.6px;top:83.5px;color:#222">洲/省:</div>
<div class="fld" style="left:224px;top:82.3px;width:88.2px;height:9.8px;"><div class="t m" style="top:1.4px">guangdong</div></div>
<div class="lbl s" style="right:258.6px;top:99.1px;color:#222">城市:</div>
<div class="fld" style="left:70px;top:97.9px;width:88.4px;height:9.8px;"><div class="t m" style="top:1.4px">shenzhen</div></div>
<div class="lbl s" style="right:104.6px;top:99.1px;color:#222">邮编:</div>
<div class="fld" style="left:224px;top:97.9px;width:88.2px;height:9.8px;"><div class="t m" style="top:1.4px">34242424</div></div>
<div class="lbl s" style="right:258.6px;top:114.7px;color:#222">地址:</div>
<div class="fld" style="left:70px;top:113.5px;width:242.2px;height:9.8px;"><div class="t m" style="top:1.4px">shenzhen,luohu</div></div>
<div class="lbl s" style="right:258.6px;top:130.5px;color:#222">电话:</div>
<div class="fld" style="left:70px;top:129.3px;width:88.4px;height:9.8px;"><div class="t m" style="top:1.4px">13723421481</div></div>
<div class="lbl s" style="right:104.6px;top:130.5px;color:#222">电子邮件:</div>
<div class="fld" style="left:224px;top:129.3px;width:88.2px;height:9.8px;"><div class="t m" style="top:1.4px">gongyangfengg@126.com</div></div>
<div class="lbl s" style="right:258.6px;top:146.3px;color:#222">帐户类型:</div>
<div class="fld" style="left:70px;top:144px;width:88px;height:12px;"><div class="t m" style="top:2.4px">IfxTurbo</div><div class="cb"><svg class="a" style="left:1.500px;top:2.600px" width="5.400" height="4" viewBox="0 0 5.400 4"><path d="M.5 .7l2.200 2.200 2.200-2.200" stroke="#34509a" stroke-width="1.400" fill="none"/></svg></div></div>
<div class="lbl s" style="right:104.6px;top:146.3px;color:#222">开户货币:</div>
<div class="fld" style="left:224px;top:145.1px;width:88.2px;height:9.8px;background:#ece9d8;border-color:#b0ae9e;color:#55534c;"><div class="t m" style="top:1.4px">USD</div></div>
<div class="lbl s" style="right:258.6px;top:161.9px;color:#222">交易倍数:</div>
<div class="fld" style="left:70px;top:159.6px;width:53px;height:12px;"><div class="t m" style="top:2.4px">1:100</div><div class="cb"><svg class="a" style="left:1.500px;top:2.600px" width="5.400" height="4" viewBox="0 0 5.400 4"><path d="M.5 .7l2.200 2.200 2.200-2.200" stroke="#34509a" stroke-width="1.400" fill="none"/></svg></div></div>
<div class="lbl s" style="right:104.6px;top:161.9px;color:#222">存款额:</div>
<div class="fld" style="left:224px;top:159.6px;width:52.8px;height:12px;"><div class="t m" style="top:2.4px">5000</div><div class="cb"><svg class="a" style="left:1.500px;top:2.600px" width="5.400" height="4" viewBox="0 0 5.400 4"><path d="M.5 .7l2.200 2.200 2.200-2.200" stroke="#34509a" stroke-width="1.400" fill="none"/></svg></div></div>
<div class="a" style="left:70.6px;top:179px;width:7.4px;height:7.400px;background:linear-gradient(135deg,#e4e4dc,#fff);border:1px solid #6a86a4"><svg class="a" style="left:.2px;top:.2px" width="5.4" height="5.4" viewBox="0 0 5.4 5.4"><path d="M.8 2.600l1.400 1.600 2.400-3.200" stroke="#21a121" stroke-width="1.200" fill="none"/></svg></div>
<div class="a" style="left:79.2px;top:177.800px;width:85.4px;height:9.600px;border:1px dotted #666;background:#dedccc"></div>
<div class="t s" style="left:80.4px;top:179.200px;font-size:7px;color:#111">我同意订阅你们的新闻简报</div>
<div class="a" style="left:1.8px;top:194.200px;width:320px;height:1px;background:#aca899"></div>
<div class="a" style="left:1.8px;top:195.200px;width:320px;height:1px;background:#fff"></div>
<div class="btn s" style="left:180px;top:202.8px;width:41px;color:#aca899;border-color:#c9c7ba;background:#f5f4ea">&lt; 上一步(B)</div>
<div class="btn s" style="left:222.6px;top:202.8px;width:43.4px;box-shadow:inset 0 0 0 1px #a6c2f4;color:#111">下一步(N) &gt;</div>
<div class="btn s" style="left:272.8px;top:202.8px;width:42.6px;color:#111">取消</div>
</div>
<div class="a" style="left:0;top:436.8px;width:750px;height:13.4px;background:#ece9d8;border-top:1px solid #fbfaf4"></div>
<div class="t s" style="left:2.2px;top:441.6px;font-size:6.3px;letter-spacing:.1px;color:#333">寻求帮助,请按F1键</div>
<div class="t m" style="left:242.8px;top:441.6px;font-size:6.2px;letter-spacing:-.3px;color:#333">Default</div>
<div class="a" style="left:239.6px;top:440.2px;width:1px;height:9px;background:#c2bfb0;border-right:1px solid #fff;box-sizing:content-box"></div>
<div class="a" style="left:336px;top:440.2px;width:1px;height:9px;background:#c2bfb0;border-right:1px solid #fff;box-sizing:content-box"></div>
<div class="a" style="left:403.6px;top:440.2px;width:1px;height:9px;background:#c2bfb0;border-right:1px solid #fff;box-sizing:content-box"></div>
<div class="a" style="left:453.6px;top:440.2px;width:1px;height:9px;background:#c2bfb0;border-right:1px solid #fff;box-sizing:content-box"></div>
<div class="a" style="left:504px;top:440.2px;width:1px;height:9px;background:#c2bfb0;border-right:1px solid #fff;box-sizing:content-box"></div>
<div class="a" style="left:554.6px;top:440.2px;width:1px;height:9px;background:#c2bfb0;border-right:1px solid #fff;box-sizing:content-box"></div>
<div class="a" style="left:604.6px;top:440.2px;width:1px;height:9px;background:#c2bfb0;border-right:1px solid #fff;box-sizing:content-box"></div>
<svg class="a" style="left:657.6px;top:440.4px" width="15" height="9" viewBox="0 0 15 9"><rect x="0" y="0" width="15" height="9" fill="#d8d4c2"/><path d="M1.4 8.600V6.600M3.400 8.600V5.400M5.400 8.600V4.200M7.400 8.600V3" stroke="#2e9a3a" stroke-width="1.300"/><path d="M9.400 8.600V2.200M11.400 8.600V1.400M13.400 8.600V.6" stroke="#c04a3a" stroke-width="1.300"/></svg>
<div class="t m" style="left:685.6px;top:441.6px;font-size:6.2px;letter-spacing:-.34px;color:#444">1850/4 kb</div>
<svg class="a" style="left:741px;top:441px" width="8" height="8" viewBox="0 0 8 8"><path d="M7.500 1L1 7.500M7.500 3.500L3.500 7.500M7.500 6L6 7.500" stroke="#b8b5a6" stroke-width=".9"/></svg>
<div class="a" id="task">
<div class="a" style="left:0;top:0;width:55px;height:18px;border-radius:0 8px 8px 0;background:linear-gradient(#5eb45a 0,#3f9a40 18%,#3a9a3c 55%,#2f8a32 88%,#26762a 100%);box-shadow:1px 0 2px rgba(0,0,30,.5)"></div>
<svg class="a" style="left:6px;top:3.4px" width="12" height="11" viewBox="0 0 12 11"><path d="M1 1.600c1.600-.8 3-.8 4.400 0l-.8 3.400c-1.400-.8-2.800-.8-4.400 0z" fill="#e8582c"/><path d="M6.200 1.800c1.600.8 3 .8 4.600 0l-.8 3.400c-1.600.8-3 .8-4.600 0z" fill="#7ec850"/><path d="M0 6c1.600-.8 3-.8 4.400 0l-.8 3.400c-1.400-.8-2.800-.8-4.400 0z" fill="#4a90e8"/><path d="M5.200 6.200c1.600.8 3 .8 4.600 0l-.8 3.400c-1.600.8-3 .8-4.600 0z" fill="#f4cc3a"/></svg>
<div class="t s" style="left:21.6px;top:3.4px;font-size:10.4px;font-style:italic;font-weight:500;color:#fff;text-shadow:.6px .8px 1px #1c4a1c">开始</div>
<svg class="a" style="left:64px;top:3.6px" width="9" height="11" viewBox="0 0 9 11"><rect x="1.400" y=".6" width="6" height="6.400" rx="1" fill="#d8e8fc" stroke="#88a8d8" stroke-width=".6"/><path d="M3 7.600h3l.6 2.400h-4.200z" fill="#b8ccec"/><path d="M3.400 2.400h2.400v2.400h-2.400z" fill="#4a86e0"/></svg>
<svg class="a" style="left:75.400px;top:3.600px" width="11" height="11" viewBox="0 0 11 11"><circle cx="5.400" cy="5.400" r="4.800" fill="#f4f8ff" stroke="#fff" stroke-width=".6"/><path d="M7.400 3.200c-2.400-1.400-4.600.8-2.200 2.200 2.400 1.400.2 3.600-2.200 2.200" stroke="#2a5ac8" stroke-width="1.500" fill="none"/></svg>
<svg class="a" style="left:91.400px;top:3.200px" width="8" height="12" viewBox="0 0 8 12"><rect x="1" y=".6" width="5.600" height="10.400" rx=".8" fill="#c8d0dc" stroke="#8894a8" stroke-width=".6"/><path d="M2 2.600h3.600M2 4.400h3.600M2 6.200h3.600M2 8h3.600" stroke="#6a7688" stroke-width=".7"/></svg>
<div class="tbtn" style="left:111.6px;background:linear-gradient(#3460c8,#3868d0 30%,#3c6ed6);box-shadow:inset .6px .6px 1.5px #1c3a8a;"><svg class="a" style="left:4.6px;top:2.200px" width="9" height="9" viewBox="0 0 9 9"><path d="M3 1.600C1.400 3 1.200 5.600 2.400 6.600 3.200 7.200 4.200 6.600 4 5.600M7.600 3.800C6.400 3.200 5.200 4 5.200 5.200 5.400 6.400 6.800 6.600 7.800 6" fill="none" stroke="#f4e46a" stroke-width="1.200"/></svg><div class="t s" style="left:16.4px;top:3.2px;font-size:6.8px">6...</div></div>
<div class="tbtn" style="left:149.93px;"><svg class="a" style="left:4.6px;top:2.200px" width="9" height="9" viewBox="0 0 9 9"><path d="M.6 2h3l.8 1h4v4.600h-7.800z" fill="#f4d860" stroke="#b89a28" stroke-width=".5"/></svg><div class="t s" style="left:16.4px;top:3.2px;font-size:6.8px">网...</div></div>
<div class="tbtn" style="left:188.26px;"><svg class="a" style="left:4.6px;top:2.200px" width="9" height="9" viewBox="0 0 9 9"><circle cx="4.400" cy="4.400" r="4" fill="#d82a20" stroke="#fff" stroke-width=".5"/><path d="M2.400 6.200V2.800l2 2 2-2v3.400" stroke="#fff" stroke-width=".9" fill="none"/></svg><div class="t s" style="left:16.4px;top:3.2px;font-size:6.8px">6...</div></div>
<div class="tbtn" style="left:226.59px;"><svg class="a" style="left:4.6px;top:2.200px" width="9" height="9" viewBox="0 0 9 9"><circle cx="4.400" cy="4.400" r="4" fill="#f4f8ff"/><path d="M6 2.800c-2-1.200-3.800.6-1.800 1.800 2 1.200.2 3-1.800 1.800" stroke="#2a5ac8" stroke-width="1.200" fill="none"/></svg><div class="t s" style="left:16.4px;top:3.2px;font-size:6.8px">写...</div></div>
<div class="tbtn" style="left:264.92px;"><svg class="a" style="left:4.6px;top:2.200px" width="9" height="9" viewBox="0 0 9 9"><circle cx="4.400" cy="4.400" r="4" fill="#fff" stroke="#1a3aa8" stroke-width=".6"/><path d="M4.400 .4a4 4 0 0 1 4 4h-4zM4.400 8.400a4 4 0 0 1-4-4h4z" fill="#1a3aa8"/></svg><div class="t s" style="left:16.4px;top:3.2px;font-size:6.8px">博...</div></div>
<div class="tbtn" style="left:303.25px;"><svg class="a" style="left:4.6px;top:2.200px" width="9" height="9" viewBox="0 0 9 9"><rect x=".8" y=".6" width="6" height="7" fill="#f4f6fc" stroke="#5a78b8" stroke-width=".6"/><path d="M2 2.400h3.600M2 3.800h3.600M2 5.200h2.400" stroke="#7a8ab0" stroke-width=".5"/><rect x="3.800" y="3.600" width="4.600" height="4.600" fill="#2a56b8"/><path d="M4.600 4.600l.8 2.600.8-2 .8 2 .800-2.600" stroke="#fff" stroke-width=".5" fill="none"/></svg><div class="t s" style="left:16.4px;top:3.2px;font-size:6.8px">论...</div></div>
<div class="tbtn" style="left:341.58px;"><svg class="a" style="left:4.6px;top:2.200px" width="9" height="9" viewBox="0 0 9 9"><rect x=".8" y=".6" width="6" height="7" fill="#f4f6fc" stroke="#5a78b8" stroke-width=".6"/><path d="M2 2.400h3.600M2 3.800h3.600M2 5.200h2.400" stroke="#7a8ab0" stroke-width=".5"/><rect x="3.800" y="3.600" width="4.600" height="4.600" fill="#2a56b8"/><path d="M4.600 4.600l.8 2.600.8-2 .8 2 .800-2.600" stroke="#fff" stroke-width=".5" fill="none"/></svg><div class="t s" style="left:16.4px;top:3.2px;font-size:6.8px">如...</div></div>
<div class="tbtn" style="left:379.91px;"><svg class="a" style="left:4.6px;top:2.200px" width="9" height="9" viewBox="0 0 9 9"><rect x=".8" y=".6" width="6" height="7" fill="#f4f6fc" stroke="#5a78b8" stroke-width=".6"/><path d="M2 2.400h3.600M2 3.800h3.600M2 5.200h2.400" stroke="#7a8ab0" stroke-width=".5"/><rect x="3.800" y="3.600" width="4.600" height="4.600" fill="#2a56b8"/><path d="M4.600 4.600l.8 2.600.8-2 .8 2 .800-2.600" stroke="#fff" stroke-width=".5" fill="none"/></svg><div class="t s" style="left:16.4px;top:3.2px;font-size:6.8px">关...</div></div>
<div class="tbtn" style="left:418.24px;"><svg class="a" style="left:4.6px;top:2.200px" width="9" height="9" viewBox="0 0 9 9"><rect x=".8" y=".6" width="6" height="7" fill="#f4f6fc" stroke="#5a78b8" stroke-width=".6"/><path d="M2 2.400h3.600M2 3.800h3.600M2 5.200h2.400" stroke="#7a8ab0" stroke-width=".5"/><rect x="3.800" y="3.600" width="4.600" height="4.600" fill="#2a56b8"/><path d="M4.600 4.600l.8 2.600.8-2 .8 2 .800-2.600" stroke="#fff" stroke-width=".5" fill="none"/></svg><div class="t s" style="left:16.4px;top:3.2px;font-size:6.8px">开...</div></div>
<div class="tbtn" style="left:456.57px;"><svg class="a" style="left:4.6px;top:2.200px" width="9" height="9" viewBox="0 0 9 9"><rect x=".8" y=".6" width="6" height="7" fill="#f4f6fc" stroke="#5a78b8" stroke-width=".6"/><path d="M2 2.400h3.600M2 3.800h3.600M2 5.200h2.400" stroke="#7a8ab0" stroke-width=".5"/><rect x="3.800" y="3.600" width="4.600" height="4.600" fill="#2a56b8"/><path d="M4.600 4.600l.8 2.600.8-2 .8 2 .800-2.600" stroke="#fff" stroke-width=".5" fill="none"/></svg><div class="t s" style="left:16.4px;top:3.2px;font-size:6.8px">外...</div></div>
<div class="tbtn" style="left:494.9px;"><svg class="a" style="left:4.6px;top:2.200px" width="9" height="9" viewBox="0 0 9 9"><rect x="1" y=".6" width="6.400" height="7.600" rx="1" fill="#f4c83a" stroke="#b88a1a" stroke-width=".5"/><path d="M2.400 3h3.600M2.400 5h3.600" stroke="#fff" stroke-width=".8"/></svg><div class="t s" style="left:16.4px;top:3.2px;font-size:6.8px">罗...</div></div>
<div class="tbtn" style="left:533.23px;"><svg class="a" style="left:4.6px;top:2.200px" width="9" height="9" viewBox="0 0 9 9"><path d="M1 6.600c0-3 1.600-5.600 3.800-5.600 1.600 0 2.200 1.600 1.200 2.600l2.400 3.600z" fill="#9ac83a" stroke="#4a7a1a" stroke-width=".5"/><circle cx="5" cy="2.400" r=".5" fill="#222"/></svg><div class="t s" style="left:16.4px;top:3.2px;font-size:6.8px">L...</div></div>
<div class="tbtn" style="left:571.56px;"><svg class="a" style="left:4.6px;top:2.200px" width="9" height="9" viewBox="0 0 9 9"><rect x=".8" y=".6" width="6" height="7" fill="#f4f6fc" stroke="#5a78b8" stroke-width=".6"/><path d="M2 2.400h3.600M2 3.800h3.600M2 5.200h2.400" stroke="#7a8ab0" stroke-width=".5"/><rect x="3.800" y="3.600" width="4.600" height="4.600" fill="#2a56b8"/><path d="M4.600 4.600l.8 2.600.8-2 .8 2 .800-2.600" stroke="#fff" stroke-width=".5" fill="none"/></svg><div class="t s" style="left:16.4px;top:3.2px;font-size:6.8px">■...</div></div>
<svg class="a" style="left:615.600px;top:5.400px" width="9" height="7" viewBox="0 0 9 7"><rect x=".4" y=".6" width="8" height="5.600" rx=".6" fill="#d8dce4" stroke="#555" stroke-width=".5"/><path d="M1.400 2.200h6M1.400 3.600h6M2.400 5h4" stroke="#444" stroke-width=".6" stroke-dasharray=".8 .5"/></svg>
<div class="a" style="left:626.4px;top:0;width:123.6px;height:18px;background:linear-gradient(#37a4f0 0,#169af0 12%,#1290e8 50%,#108ae2 85%,#0c6cc0 100%);border-left:1px solid #0a2f8c;box-shadow:inset 1px 0 0 #3cb0f8"></div>
<svg class="a" style="left:626.600px;top:4px" width="9.600" height="9.600" viewBox="0 0 9.600 9.600"><circle cx="4.800" cy="4.800" r="4.400" fill="#2a78e4" stroke="#bcdcfc" stroke-width=".6"/><path d="M5.600 2.600L3.400 4.800l2.200 2.200" stroke="#fff" stroke-width="1.100" fill="none"/></svg>
<svg class="a" style="left:638.1px;top:4.200px" width="9" height="9" viewBox="0 0 9 9"><rect x=".6" y=".6" width="7.800" height="7.800" fill="#e02020"/><path d="M4.500 1.600v5.800M1.600 4.500h5.800" stroke="#fff" stroke-width="1.600"/></svg>
<svg class="a" style="left:648.1px;top:4.200px" width="9" height="9" viewBox="0 0 9 9"><path d="M1 7.600c0-3.400 1.600-6.400 3.800-6.400 1.600 0 2.200 1.600 1.200 2.600l2.400 4z" fill="#9ac83a" stroke="#4a7a1a" stroke-width=".5"/></svg>
<svg class="a" style="left:657.9px;top:4.200px" width="9" height="9" viewBox="0 0 9 9"><rect x=".6" y=".6" width="7.800" height="7.800" fill="#f4a020"/><path d="M2 2h2.400v2.400h-2.400zM5 5h2.400v2.400h-2.400z" fill="#fff4c8"/></svg>
<svg class="a" style="left:668.7px;top:4.200px" width="9" height="9" viewBox="0 0 9 9"><ellipse cx="4.500" cy="5" rx="3.600" ry="3.800" fill="#222"/><ellipse cx="4.500" cy="5.600" rx="2" ry="2.600" fill="#fff"/><path d="M1 7.600h7" stroke="#e8a020" stroke-width="1.400"/><path d="M1.400 4.600h6.200" stroke="#e02020" stroke-width="1"/></svg>
<svg class="a" style="left:679.7px;top:4.200px" width="9" height="9" viewBox="0 0 9 9"><rect x=".4" y=".4" width="8.200" height="8.200" rx="1" fill="#e8481c"/><path d="M6.400 2.600c-2.200-1.200-4 .6-2 1.800 2 1.200.2 3-2 1.800" stroke="#fff" stroke-width="1.300" fill="none"/></svg>
<svg class="a" style="left:690.5px;top:4.200px" width="9" height="9" viewBox="0 0 9 9"><ellipse cx="4.500" cy="5" rx="3.600" ry="3.800" fill="#222"/><ellipse cx="4.500" cy="5.600" rx="2" ry="2.600" fill="#fff"/><path d="M1 7.600h7" stroke="#e8a020" stroke-width="1.400"/><path d="M1.400 4.600h6.200" stroke="#e02020" stroke-width="1"/></svg>
<svg class="a" style="left:701.1px;top:4.200px" width="9" height="9" viewBox="0 0 9 9"><path d="M1.600 7.600V5.600M3.600 7.600V4M5.600 7.600V2.400M7.600 7.600V1" stroke="#6ad86a" stroke-width="1.200"/></svg>
<svg class="a" style="left:710.9px;top:4.200px" width="9" height="9" viewBox="0 0 9 9"><path d="M.8 1h7.400l-.6 5-3.100 2.400-3.100-2.400z" fill="#f4f8ff" stroke="#2a5ab8" stroke-width=".8"/><path d="M2.600 3.200l1.900 2.400 1.900-2.400" stroke="#2a78e0" stroke-width="1" fill="none"/></svg>
<div class="t m" style="left:724.600px;top:5px;font-size:6.8px;color:#fff">17:38</div>
</div>
</body></html>
